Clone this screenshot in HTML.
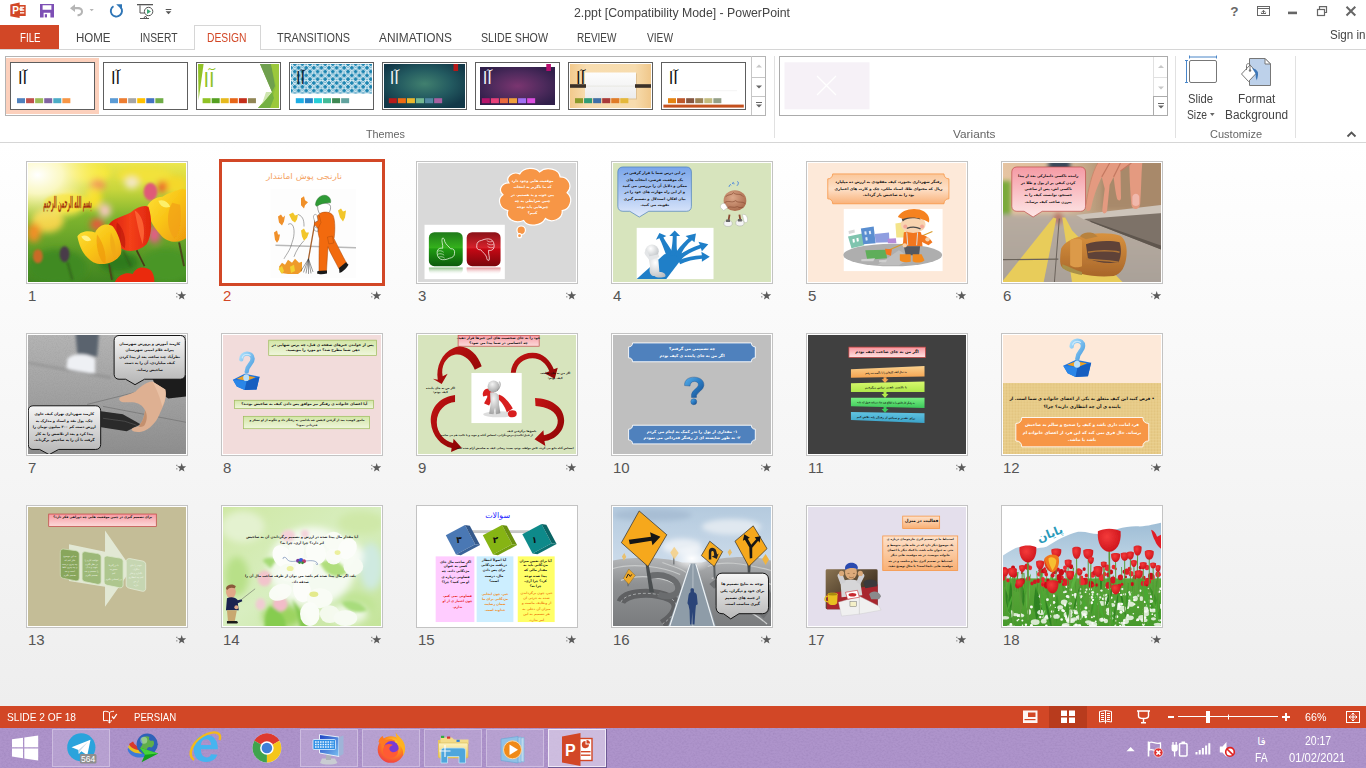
<!DOCTYPE html>
<html lang="en">
<head>
<meta charset="utf-8">
<title>2.ppt [Compatibility Mode] - PowerPoint</title>
<style>
html,body{margin:0;padding:0;}
body{width:1366px;height:768px;overflow:hidden;position:relative;background:#fff;font-family:"Liberation Sans",sans-serif;font-size:12px;color:#444;}
.abs{position:absolute;}
.t{position:absolute;white-space:nowrap;line-height:1;transform-origin:0 0;}
#titlebar{left:0;top:0;width:1366px;height:25px;background:#fff;}
#tabs{left:0;top:25px;width:1366px;height:24px;background:#fff;border-bottom:1px solid #d6d6d6;}
#filetab{left:0;top:25px;width:59px;height:24px;background:#d24726;}
#designtab{left:194px;top:25px;width:67px;height:25px;background:#fff;border:1px solid #d6d6d6;border-bottom:none;box-sizing:border-box;}
#ribbon{left:0;top:50px;width:1366px;height:92px;background:#fff;border-bottom:1px solid #d6d6d6;}
#sorter{left:0;top:143px;width:1366px;height:563px;background:linear-gradient(#ffffff,#eeeeee);}
#status{left:0;top:706px;width:1366px;height:22px;background:#d24726;}
#taskbar{left:0;top:728px;width:1366px;height:40px;background:#ae94cb;}
.tab{font-size:12px;color:#444;top:31.9px;}
.glabel{font-size:11px;color:#666;top:128.8px;}
.rb{font-size:12px;color:#444;}
.tk{font-size:12px;color:#fff;}
.st{font-size:11.5px;color:#fff;top:712.1px;}
.thumb{position:absolute;width:160px;height:121px;border:1px solid #c3c3c3;background:#fff;overflow:hidden;}
.thumb svg{position:absolute;left:1px;top:1px;width:158px;height:119px;display:block;}
.thumb.sel{border:3px solid #d24726;width:160px;height:121px;}
.thumb.sel svg{left:0;top:0;width:160px;height:121px;}
.num{position:absolute;font-size:15px;color:#555;line-height:1;}
.star{position:absolute;font-size:13px;color:#555;line-height:1;}
.fa{font-family:"DejaVu Sans","Liberation Sans",sans-serif;direction:rtl;}
</style>
<style>
#tb0{transform:scaleX(0.809)}
#tb1{transform:scaleX(0.958)}
#tb2{transform:scaleX(0.856)}
#tb3{transform:scaleX(0.858)}
#tb4{transform:scaleX(0.905)}
#tb5{transform:scaleX(0.989)}
#tb6{transform:scaleX(0.889)}
#tb7{transform:scaleX(0.834)}
#tb8{transform:scaleX(0.848)}
#ttl{transform:scaleX(0.946)}
#signin{transform:scaleX(0.893)}
#gl0{transform:scaleX(0.981)}
#gl1{transform:scaleX(1.075)}
#gl2{transform:scaleX(1.001)}
#rb0{transform:scaleX(0.937)}
#rb1{transform:scaleX(0.857)}
#rb2{transform:scaleX(0.981)}
#rb3{transform:scaleX(0.984)}
#st0{transform:scaleX(0.885)}
#st1{transform:scaleX(0.836)}
#st2{transform:scaleX(0.929)}
#tk0{transform:scaleX(0.866)}
#tk1{transform:scaleX(0.872)}
#tk2{transform:scaleX(0.936)}
</style>
</head>
<body>
<div class="abs" id="titlebar"></div>
<!-- quick access toolbar -->
<svg class="abs" style="left:0;top:0" width="180" height="25" viewBox="0 0 180 25">
  <!-- powerpoint logo -->
  <path d="M10.3 4.6 L19.6 2.6 V18 L10.3 16.2 Z" fill="#d24726"/>
  <rect x="19" y="5" width="6.7" height="11" fill="#d24726"/>
  <rect x="20" y="6.6" width="4.2" height="1.3" fill="#fff"/><rect x="20" y="9.4" width="4.2" height="1.3" fill="#fff"/><rect x="20" y="12.2" width="4.2" height="1.3" fill="#fff"/>
  <circle cx="21" cy="9" r="1.8" fill="#fff" opacity=".85"/>
  <text x="12.2" y="14" font-family="Liberation Sans, sans-serif" font-weight="bold" font-size="10" fill="#fff">P</text>
  <!-- save -->
  <path d="M40 4 H54 V17.400 H40 Z M42.600 5.300 V9.800 H51.400 V5.300 Z M43.600 12.800 V17.400 H50.400 V12.800 Z" fill="#7d4fb5" fill-rule="evenodd"/>
  <rect x="44.800" y="14.200" width="2.200" height="3.200" fill="#7d4fb5"/>
  <!-- undo -->
  <path d="M70 8.3 L75 4.3 V7 H78 C81.5 7 83 9.3 83 11.5 C83 14.2 80.8 16.3 77.5 16.3 V14.3 C79.6 14.3 81 13.2 81 11.5 C81 10 79.8 9.2 78 9.2 H75 V12 Z" fill="#b5b5b5"/>
  <path d="M89.6 9 H93.8 L91.7 11.3 Z" fill="#b5b5b5"/>
  <!-- redo/repeat -->
  <path d="M113.5 6.2 A5.6 5.6 0 1 0 120.5 7.2" fill="none" stroke="#2e75b6" stroke-width="1.9"/>
  <path d="M116.2 4.2 H122 V10 Z" fill="#2e75b6"/>
  <!-- start from beginning -->
  <rect x="137" y="4" width="16" height="1.3" fill="#555"/>
  <path d="M140 5.3 V13 H144.5" fill="none" stroke="#555" stroke-width="1"/>
  <circle cx="148.6" cy="11.5" r="4.2" fill="#fff" stroke="#555" stroke-width="1"/>
  <path d="M147 9 L151 11.5 L147 14 Z" fill="#3fa876"/>
  <path d="M140 18.5 H149 M143.5 18.5 L145.5 16 L147 18.5" fill="none" stroke="#555" stroke-width="1"/>
  <!-- customize -->
  <rect x="165.7" y="9" width="5.6" height="1" fill="#555"/>
  <path d="M165.7 11.3 H171.3 L168.5 14.2 Z" fill="#555"/>
</svg>
<div class="t" id="ttl" style="left:574px;top:6px;font-size:13px;color:#444;">2.ppt [Compatibility Mode] - PowerPoint</div>
<!-- window controls -->
<svg class="abs" style="left:1220px;top:0" width="146" height="25" viewBox="1220 0 146 25">
  <text x="1230.300" y="16" font-family="Liberation Sans, sans-serif" font-weight="bold" font-size="13.500" fill="#666">?</text>
  <rect x="1257.500" y="6.500" width="12" height="9" fill="none" stroke="#666" stroke-width="1"/>
  <path d="M1257.500 8.500 H1269.500" stroke="#666" stroke-width="1" fill="none"/>
  <path d="M1263.500 14 V10.500 M1261.300 12.500 L1263.500 10.300 L1265.700 12.500 M1261 13.500 H1266" fill="none" stroke="#666" stroke-width="1"/>
  <rect x="1288" y="11.600" width="9" height="2.600" fill="#666"/>
  <rect x="1317.500" y="9.500" width="7" height="6" fill="#fff" stroke="#666" stroke-width="1.200"/>
  <path d="M1319.500 9.500 V6.600 H1326.500 V12.500 H1324.500" fill="none" stroke="#666" stroke-width="1.200"/>
  <path d="M1346.500 6.700 L1355.300 15.500 M1355.300 6.700 L1346.500 15.500" stroke="#666" stroke-width="2" fill="none"/>
</svg>
<!-- tabs -->
<div class="abs" id="tabs"></div>
<div class="abs" id="filetab"></div>
<div class="abs" id="designtab"></div>
<div class="t tab" id="tb0" style="left:19.500px;color:#fff;">FILE</div>
<div class="t tab" id="tb1" style="left:76px;">HOME</div>
<div class="t tab" id="tb2" style="left:139.500px;">INSERT</div>
<div class="t tab" id="tb3" style="left:207px;color:#d24726;">DESIGN</div>
<div class="t tab" id="tb4" style="left:276.500px;">TRANSITIONS</div>
<div class="t tab" id="tb5" style="left:379px;">ANIMATIONS</div>
<div class="t tab" id="tb6" style="left:481px;">SLIDE SHOW</div>
<div class="t tab" id="tb7" style="left:577px;">REVIEW</div>
<div class="t tab" id="tb8" style="left:646.500px;">VIEW</div>
<div class="t" id="signin" style="left:1329.800px;top:28.200px;font-size:13px;color:#444;">Sign in</div>
<!-- ribbon -->
<div class="abs" id="ribbon"></div>
<!-- themes gallery -->
<div class="abs" style="left:5px;top:56px;width:759px;height:58px;border:1px solid #b4b4b4;background:#fff;"></div>
<div class="abs" style="left:6px;top:58px;width:93px;height:56px;background:#fcd0bc;"></div>
<svg class="abs" style="left:10px;top:62px" width="85" height="48" viewBox="0 0 85 48"><rect width="85" height="48" fill="#fff"/><text x="17.2" y="21.6" font-family="DejaVu Sans, sans-serif" font-size="16.500" fill="#111" text-anchor="start" direction="rtl" >آا</text><rect x="7.00" y="36.20" width="8" height="5" fill="#4f81bd"/><rect x="16.07" y="36.20" width="8" height="5" fill="#c0504d"/><rect x="25.14" y="36.20" width="8" height="5" fill="#9bbb59"/><rect x="34.21" y="36.20" width="8" height="5" fill="#8064a2"/><rect x="43.28" y="36.20" width="8" height="5" fill="#4bacc6"/><rect x="52.35" y="36.20" width="8" height="5" fill="#f79646"/><rect x="0.5" y="0.5" width="84" height="47" fill="none" stroke="#5e5e5e" stroke-width="1"/></svg>
<svg class="abs" style="left:103px;top:62px" width="85" height="48" viewBox="0 0 85 48"><rect width="85" height="48" fill="#fff"/><text x="17.2" y="21.6" font-family="DejaVu Sans, sans-serif" font-size="16.500" fill="#111" text-anchor="start" direction="rtl" >آا</text><rect x="7.00" y="36.20" width="8" height="5" fill="#5b9bd5"/><rect x="16.07" y="36.20" width="8" height="5" fill="#ed7d31"/><rect x="25.14" y="36.20" width="8" height="5" fill="#a5a5a5"/><rect x="34.21" y="36.20" width="8" height="5" fill="#ffc000"/><rect x="43.28" y="36.20" width="8" height="5" fill="#4472c4"/><rect x="52.35" y="36.20" width="8" height="5" fill="#70ad47"/><rect x="0.5" y="0.5" width="84" height="47" fill="none" stroke="#5e5e5e" stroke-width="1"/></svg>
<svg class="abs" style="left:196px;top:62px" width="85" height="48" viewBox="0 0 85 48"><rect width="85" height="48" fill="#fff"/><path d="M2 2 H7.6 L2.6 38 Z" fill="#90c226"/><path d="M64 2 H83 V46 H62 L76 30 Z" fill="#8cc03a"/><path d="M64 2 H75 L79 24 L76 30 Z" fill="#6f9f4e"/><path d="M75 2 H83 V46 H74 L80 24 Z" fill="#9bc83c"/><path d="M76 30 L66 42 L62 46 H74 L78 36 Z" fill="#74b043"/><path d="M70 30 L76 30 L66 42 Z" fill="#cfe6b0"/><text x="18.700" y="25" font-family="DejaVu Sans, sans-serif" font-size="20" fill="#90c226" text-anchor="start" direction="rtl" >آا</text><rect x="6.60" y="36.20" width="8" height="5" fill="#90c226"/><rect x="15.67" y="36.20" width="8" height="5" fill="#54a021"/><rect x="24.74" y="36.20" width="8" height="5" fill="#e6b91e"/><rect x="33.81" y="36.20" width="8" height="5" fill="#e76618"/><rect x="42.88" y="36.20" width="8" height="5" fill="#c42f1a"/><rect x="51.95" y="36.20" width="8" height="5" fill="#918655"/><rect x="0.5" y="0.5" width="84" height="47" fill="none" stroke="#5e5e5e" stroke-width="1"/></svg>
<svg class="abs" style="left:289px;top:62px" width="85" height="48" viewBox="0 0 85 48"><rect width="85" height="48" fill="#fff"/><defs><pattern id="pt4" width="7.600" height="7.600" patternUnits="userSpaceOnUse" x="2" y="2"><rect width="7.600" height="7.600" fill="#1b84b0"/><path d="M-1 -1 L8.600 8.600 M8.600 -1 L-1 8.600" stroke="#e8f4f9" stroke-width="1.900"/><path d="M-1 -1 L8.600 8.600 M8.600 -1 L-1 8.600" stroke="#1b84b0" stroke-width=".600" stroke-dasharray="2.600 1.200" stroke-dashoffset="-.300"/></pattern></defs><rect x="2" y="2" width="81" height="29.5" fill="url(#pt4)"/><text x="16.2" y="21.6" font-family="DejaVu Sans, sans-serif" font-size="16.500" fill="#10263a" text-anchor="start" direction="rtl" >آا</text><rect x="6.80" y="36.20" width="8" height="5" fill="#1cade4"/><rect x="15.87" y="36.20" width="8" height="5" fill="#2683c6"/><rect x="24.94" y="36.20" width="8" height="5" fill="#27ced7"/><rect x="34.01" y="36.20" width="8" height="5" fill="#42ba97"/><rect x="43.08" y="36.20" width="8" height="5" fill="#3e8853"/><rect x="52.15" y="36.20" width="8" height="5" fill="#62a39f"/><rect x="0.5" y="0.5" width="84" height="47" fill="none" stroke="#5e5e5e" stroke-width="1"/></svg>
<svg class="abs" style="left:382px;top:62px" width="85" height="48" viewBox="0 0 85 48"><rect width="85" height="48" fill="#fff"/><defs><radialGradient id="g5" cx=".5" cy=".45" r=".6"><stop offset="0" stop-color="#41806f"/><stop offset=".55" stop-color="#235a60"/><stop offset="1" stop-color="#123848"/></radialGradient></defs><rect x="2" y="2" width="81" height="44" fill="url(#g5)"/><rect x="71.5" y="2" width="4.6" height="7" fill="#b71818"/><text x="16.8" y="21.6" font-family="DejaVu Sans, sans-serif" font-size="16.500" fill="#f4f4f4" text-anchor="start" direction="rtl" >آا</text><rect x="6.80" y="36.20" width="8" height="5" fill="#b71a1a"/><rect x="15.87" y="36.20" width="8" height="5" fill="#ee6a12"/><rect x="24.94" y="36.20" width="8" height="5" fill="#ecb82c"/><rect x="34.01" y="36.20" width="8" height="5" fill="#74b892"/><rect x="43.08" y="36.20" width="8" height="5" fill="#5288a2"/><rect x="52.15" y="36.20" width="8" height="5" fill="#a860a0"/><rect x="0.5" y="0.5" width="84" height="47" fill="none" stroke="#5e5e5e" stroke-width="1"/></svg>
<svg class="abs" style="left:475px;top:62px" width="85" height="48" viewBox="0 0 85 48"><rect width="85" height="48" fill="#fff"/><defs><radialGradient id="g6" cx=".5" cy=".5" r=".6"><stop offset="0" stop-color="#7a3570"/><stop offset=".6" stop-color="#4d2a5c"/><stop offset="1" stop-color="#301f4a"/></radialGradient></defs><rect x="5" y="5" width="75" height="38" fill="url(#g6)"/><rect x="71.3" y="2" width="4.6" height="7" fill="#b80e6e"/><text x="16.8" y="21.6" font-family="DejaVu Sans, sans-serif" font-size="16.500" fill="#f4f4f4" text-anchor="start" direction="rtl" >آا</text><rect x="6.80" y="36.20" width="8" height="5" fill="#b5146a"/><rect x="15.87" y="36.20" width="8" height="5" fill="#e8407a"/><rect x="24.94" y="36.20" width="8" height="5" fill="#ea6a3e"/><rect x="34.01" y="36.20" width="8" height="5" fill="#f0a03c"/><rect x="43.08" y="36.20" width="8" height="5" fill="#a070f4"/><rect x="52.15" y="36.20" width="8" height="5" fill="#dc4ee0"/><rect x="0.5" y="0.5" width="84" height="47" fill="none" stroke="#5e5e5e" stroke-width="1"/></svg>
<svg class="abs" style="left:568px;top:62px" width="85" height="48" viewBox="0 0 85 48"><rect width="85" height="48" fill="#fff"/><defs><linearGradient id="g7" x1="0" x2="1"><stop offset="0" stop-color="#f2c98c"/><stop offset=".2" stop-color="#f8ddb0"/><stop offset=".8" stop-color="#f7dcae"/><stop offset="1" stop-color="#f0c78a"/></linearGradient><linearGradient id="g7b" x1="0" x2="0" y1="0" y2="1"><stop offset="0" stop-color="#fdfdfd"/><stop offset="1" stop-color="#ececec"/></linearGradient></defs><rect x="2" y="2" width="81" height="44" fill="url(#g7)"/><rect x="18" y="11.5" width="51" height="26" fill="#caa777" opacity=".5"/><rect x="17" y="10.5" width="51" height="26" fill="url(#g7b)"/><rect x="2" y="22.2" width="16" height="3.6" fill="#3a3028"/><rect x="67" y="22.2" width="16" height="3.6" fill="#3a3028"/><rect x="18" y="23.8" width="49" height=".5" fill="#dcdccf"/><text x="17.2" y="21.6" font-family="DejaVu Sans, sans-serif" font-size="16.500" fill="#111" text-anchor="start" direction="rtl" >آا</text><rect x="7.00" y="36.20" width="8" height="5" fill="#8a9a2a"/><rect x="16.07" y="36.20" width="8" height="5" fill="#2e9c75"/><rect x="25.14" y="36.20" width="8" height="5" fill="#3e6fa8"/><rect x="34.21" y="36.20" width="8" height="5" fill="#a83a3a"/><rect x="43.28" y="36.20" width="8" height="5" fill="#e07b27"/><rect x="52.35" y="36.20" width="8" height="5" fill="#e5b83b"/><rect x="0.5" y="0.5" width="84" height="47" fill="none" stroke="#5e5e5e" stroke-width="1"/></svg>
<svg class="abs" style="left:661px;top:62px" width="85" height="48" viewBox="0 0 85 48"><rect width="85" height="48" fill="#fff"/><rect x="2.4" y="42.6" width="80.4" height="3" fill="#c4501e"/><rect x="10" y="28.6" width="66" height=".5" fill="#e8e8e8"/><text x="16.8" y="21.6" font-family="DejaVu Sans, sans-serif" font-size="16.500" fill="#111" text-anchor="start" direction="rtl" >آا</text><rect x="7.00" y="36.20" width="8" height="5" fill="#e48312"/><rect x="16.07" y="36.20" width="8" height="5" fill="#bd582c"/><rect x="25.14" y="36.20" width="8" height="5" fill="#865640"/><rect x="34.21" y="36.20" width="8" height="5" fill="#9b8357"/><rect x="43.28" y="36.20" width="8" height="5" fill="#c2bc80"/><rect x="52.35" y="36.20" width="8" height="5" fill="#94a088"/><rect x="0.5" y="0.5" width="84" height="47" fill="none" stroke="#5e5e5e" stroke-width="1"/></svg>
<div class="abs" style="left:751px;top:56px;width:14px;height:59px;border-left:1px solid #c6c6c6;box-sizing:border-box;"></div>
<div class="abs" style="left:751px;top:77px;width:14px;height:20px;border:1px solid #c6c6c6;border-right:none;box-sizing:border-box;"></div>
<svg class="abs" style="left:751px;top:56px" width="15" height="60" viewBox="0 0 15 60"><path d="M5 11.500 H11 L8 8.500 Z" fill="#c8c8c8"/><path d="M5 29.500 H11 L8 32.500 Z" fill="#666"/><rect x="5" y="46" width="6" height="1" fill="#666"/><path d="M5 48.500 H11 L8 51.500 Z" fill="#666"/></svg>
<div class="t glabel" id="gl0" style="left:366px;">Themes</div>
<!-- variants -->
<div class="abs" style="left:774px;top:56px;width:1px;height:82px;background:#e1e1e1;"></div>
<div class="abs" style="left:779px;top:56px;width:387px;height:58px;border:1px solid #ababab;background:#fff;"></div>
<svg class="abs" style="left:784px;top:62px" width="86" height="48" viewBox="0 0 86 48"><rect x=".5" y=".3" width="85" height="47" fill="#f6f1f7"/><path d="M33 14 L52 33 M52 14 L33 33" stroke="#fff" stroke-width="1.2" fill="none"/></svg>
<div class="abs" style="left:1153px;top:57px;width:14px;height:39px;border-left:1px solid #e1e1e1;box-sizing:border-box;"></div>
<div class="abs" style="left:1153px;top:77px;width:14px;height:1px;background:#e1e1e1;"></div>
<div class="abs" style="left:1153px;top:96px;width:15px;height:20px;border:1px solid #ababab;box-sizing:border-box;"></div>
<svg class="abs" style="left:1153px;top:56px" width="15" height="60" viewBox="0 0 15 60"><path d="M5 12 H11 L8 9 Z" fill="#c8c8c8"/><path d="M5 30.500 H11 L8 33.500 Z" fill="#c8c8c8"/><rect x="5" y="47" width="6" height="1" fill="#666"/><path d="M5 49.500 H11 L8 52.500 Z" fill="#666"/></svg>
<div class="t glabel" id="gl1" style="left:953px;">Variants</div>
<!-- customize -->
<div class="abs" style="left:1175px;top:56px;width:1px;height:82px;background:#e1e1e1;"></div>
<div class="abs" style="left:1295px;top:56px;width:1px;height:82px;background:#e1e1e1;"></div>
<svg class="abs" style="left:1180px;top:54px" width="100" height="36" viewBox="1180 54 100 36">
  <rect x="1189.500" y="60.500" width="27" height="22" rx="1.500" fill="#fff" stroke="#777" stroke-width="1"/>
  <path d="M1189.500 57 H1216.500 M1189.500 55.500 V58.500 M1216.500 55.500 V58.500 M1186.500 60.500 V82.500 M1185 60.500 H1188 M1185 82.500 H1188" stroke="#4a86c8" stroke-width="1" fill="none"/>
  <path d="M1249.500 58.500 H1265 L1270.500 64 V85.500 H1249.500 Z" fill="#bdd1ea" stroke="#777" stroke-width="1"/>
  <path d="M1265 58.500 V64 H1270.500 Z" fill="#fff" stroke="#777" stroke-width="1" stroke-linejoin="round"/>
  <path d="M1241.500 74 L1250 65 L1257 72.500 L1248.500 81.500 Z" fill="#fff" stroke="#777" stroke-width="1"/>
  <path d="M1252 68 C1256 69 1258.500 71 1258 75 C1257.700 77.500 1257 79 1257 80.500 C1255.500 78 1255.800 76 1255.500 73.500 Z" fill="#3d77b8"/>
  <path d="M1246.500 70 V65.500 C1246.500 63 1250 63 1250 65.500 V70" fill="none" stroke="#777" stroke-width="1"/>
  <circle cx="1250" cy="70.500" r="1.200" fill="#777"/>
</svg>
<div class="t rb" id="rb0" style="left:1188px;top:92.500px;">Slide</div>
<div class="t rb" id="rb1" style="left:1187px;top:108.500px;">Size</div>
<svg class="abs" style="left:1209px;top:112px" width="7" height="5" viewBox="0 0 7 5"><path d="M1 1 H5.600 L3.300 4 Z" fill="#666"/></svg>
<div class="t rb" id="rb2" style="left:1237.500px;top:92.500px;">Format</div>
<div class="t rb" id="rb3" style="left:1224.500px;top:108.500px;">Background</div>
<div class="t glabel" id="gl2" style="left:1209.500px;">Customize</div>
<svg class="abs" style="left:1345px;top:129px" width="14" height="10" viewBox="0 0 14 10"><path d="M2.500 7.500 L6.500 3.500 L10.500 7.500" fill="none" stroke="#555" stroke-width="1.800"/></svg>
<!-- slide sorter thumbnails -->
<div class="thumb" style="left:26px;top:161px">
<svg viewBox="0 0 160 120" preserveAspectRatio="none"><defs>
<linearGradient id="s1bg" x1="0" y1="0" x2="0" y2="1"><stop offset="0" stop-color="#ece64e"/><stop offset=".22" stop-color="#c9d63c"/><stop offset=".45" stop-color="#7fb52e"/><stop offset="1" stop-color="#3f8420"/></linearGradient>
<radialGradient id="s1sun" cx=".06" cy=".1" r=".45"><stop offset="0" stop-color="#fff"/><stop offset=".35" stop-color="#fffbd0" stop-opacity=".9"/><stop offset="1" stop-color="#f6ee60" stop-opacity="0"/></radialGradient>
<filter id="s1b3" x="-30%" y="-30%" width="160%" height="160%"><feGaussianBlur stdDeviation="3"/></filter>
<filter id="s1b1" x="-30%" y="-30%" width="160%" height="160%"><feGaussianBlur stdDeviation="1.2"/></filter>
<filter id="s1b0" x="-10%" y="-10%" width="120%" height="120%"><feGaussianBlur stdDeviation=".5"/></filter>
<linearGradient id="s1y" x1="0" y1="0" x2="1" y2="1"><stop offset="0" stop-color="#fde43a"/><stop offset=".5" stop-color="#f9c416"/><stop offset="1" stop-color="#ee9a10"/></linearGradient>
<linearGradient id="s1r" x1="0" y1="0" x2="1" y2="0"><stop offset="0" stop-color="#d81e0c"/><stop offset=".5" stop-color="#f4401a"/><stop offset="1" stop-color="#e0260e"/></linearGradient>
</defs>
<rect width="160" height="120" fill="url(#s1bg)"/>
<g filter="url(#s1b3)">
<ellipse cx="62" cy="10" rx="22" ry="9" fill="#f7e83a"/><ellipse cx="118" cy="12" rx="28" ry="9" fill="#f2e23a"/><ellipse cx="150" cy="22" rx="12" ry="10" fill="#f4d82a"/>
<ellipse cx="70" cy="22" rx="8" ry="6" fill="#f08a50"/><ellipse cx="105" cy="20" rx="7" ry="6" fill="#f4e8c8"/><ellipse cx="136" cy="24" rx="5" ry="6" fill="#ee5a2a"/>
<ellipse cx="20" cy="58" rx="16" ry="12" fill="#f2d24a"/><ellipse cx="6" cy="70" rx="7" ry="10" fill="#f09028"/><ellipse cx="40" cy="40" rx="16" ry="12" fill="#f5e23a"/>
<ellipse cx="66" cy="36" rx="9" ry="11" fill="#f7de28"/><ellipse cx="78" cy="48" rx="6" ry="7" fill="#f6c8c0"/><ellipse cx="70" cy="62" rx="7" ry="6" fill="#e85a3a"/>
<ellipse cx="30" cy="105" rx="30" ry="18" fill="#3f8a22"/><ellipse cx="140" cy="104" rx="26" ry="18" fill="#4a9626"/><ellipse cx="92" cy="100" rx="20" ry="10" fill="#2f7a1c"/>
<ellipse cx="128" cy="72" rx="6" ry="9" fill="#e85a8a"/>
</g>
<rect width="160" height="120" fill="url(#s1sun)"/>
<g filter="url(#s1b1)">
<ellipse cx="124" cy="29" rx="7" ry="9" fill="#e05a78"/><ellipse cx="10" cy="94" rx="5" ry="7" fill="#c86a28"/><ellipse cx="37" cy="92" rx="5" ry="8" fill="#4a3a48"/>
<path d="M40 100 L45 118 M96 88 L104 104 M83 104 L86 118" stroke="#2f5a18" stroke-width="1.500" fill="none"/>
</g>
<g filter="url(#s1b0)">
<path d="M153 80 L158 104" stroke="#4a4a1a" stroke-width="2"/><path d="M110 88 L118 104" stroke="#4a3a18" stroke-width="1.800"/><path d="M82 102 L85 118" stroke="#4a4a1a" stroke-width="1.800"/>
<!-- right yellow tulip -->
<path d="M120 46 C122 38 130 34 136 34 C142 30 150 28 156 26 L160 27 V76 C152 82 140 80 134 72 C126 64 122 54 120 46 Z" fill="url(#s1y)"/>
<path d="M146 40 C140 50 140 66 148 76 C154 72 156 56 154 42 Z" fill="#f2a012" opacity=".7"/><path d="M132 38 C138 36 142 40 144 44 C138 46 134 44 132 38 Z" fill="#fdf06a"/>
<!-- red tulip -->
<path d="M82 62 C86 56 96 54 104 50 C110 44 118 42 122 44 C126 56 126 72 120 82 C112 90 100 90 94 86 C86 80 82 70 82 62 Z" fill="url(#s1r)"/>
<path d="M108 48 C116 52 120 66 116 82 C112 70 110 58 108 48 Z" fill="#ff6a3a" opacity=".8"/><path d="M90 60 C96 64 100 76 98 86 C92 82 88 70 90 60 Z" fill="#b8140a" opacity=".6"/>
<!-- left yellow tulip -->
<path d="M50 74 C54 68 62 68 68 70 C72 62 80 60 86 64 C92 72 96 84 94 92 C88 102 74 104 66 100 C56 94 52 84 50 74 Z" fill="url(#s1y)"/>
<path d="M70 72 C76 80 80 92 78 102 C72 98 68 84 70 72 Z" fill="#f09a10" opacity=".7"/><path d="M84 70 C88 78 90 88 88 96 C84 90 82 80 84 70 Z" fill="#f0a818" opacity=".7"/><path d="M54 74 C58 72 62 74 64 78 C60 80 56 78 54 74 Z" fill="#fff28a"/>
<!-- bottom red tulip -->
<path d="M88 120 C92 112 100 110 106 112 C110 104 118 104 124 108 C128 112 128 118 128 120 Z" fill="#ea2a10"/>
</g>
<!-- calligraphy -->
<ellipse cx="40" cy="40" rx="24" ry="9" fill="#f7e232" opacity=".55" filter="url(#s1b1)"/>
<g transform="translate(40 45.500) scale(1 2.300)"><text x="0" y="0" font-family="DejaVu Sans, sans-serif" font-size="7.200" font-weight="bold" fill="#a02e12" text-anchor="middle" direction="rtl" textLength="49" lengthAdjust="spacingAndGlyphs" stroke="#c88a18" stroke-width=".2">بسم الله الرحمن الرحیم</text></g></svg></div>
<div class="num" style="left:28px;top:288.1px;">1</div>
<svg class="abs" style="left:174px;top:289px" width="14" height="12" viewBox="0 0 14 12"><path d="M7.7 2.1 L8.8 5.3 L12.2 5.3 L9.5 7.4 L10.5 10.6 L7.7 8.7 L4.9 10.6 L5.9 7.4 L3.2 5.3 L6.6 5.3 Z" fill="#5a5a5a"/><rect x="2.200" y="3.800" width="1.200" height="1.100" fill="#777"/><rect x="2.200" y="7.300" width="1.200" height="1.100" fill="#777"/></svg>
<div class="thumb sel" style="left:219px;top:159px">
<svg viewBox="0 0 160 120" preserveAspectRatio="none"><rect width="160" height="120" fill="#fff"/>
<text x="82" y="17" font-family="DejaVu Sans, sans-serif" font-size="8" fill="#f4a264" text-anchor="middle" direction="rtl" textLength="76" lengthAdjust="spacingAndGlyphs">نارنجی پوش امانتدار</text>
<rect x="48.500" y="27" width="85.500" height="88" fill="#fdfdfd"/>
<!-- ground -->
<path d="M53.500 82.500 L134 85" stroke="#b9b9b9" stroke-width="1.600" fill="none"/>
<!-- swirls -->
<path d="M66 62 C72 58 74 70 70 80 C68 88 64 92 62 96 M76 52 C82 54 82 60 82 64 M82 78 C78 82 74 88 72 94" fill="none" stroke="#555" stroke-width=".5"/>
<!-- leaves -->
<g fill="#f0902a"><path d="M79 36 L82 34 L83 38 L86 40 L83 43 L82 46 L79 43 Z"/><path d="M56 54 L59 52 L61 55 L63 53 L62 59 L60 63 L57 60 Z"/><path d="M52 70 L55 68 L56 72 L58 72 L57 77 L55 80 L53 77 Z"/></g>
<g fill="#f2c62a"><path d="M67 52 L71 50 L73 53 L76 52 L75 57 L73 60 L70 58 Z"/><path d="M116 48 L119 46 L121 49 L124 48 L123 55 L121 59 L118 55 Z"/><path d="M79 68 L82 66 L84 70 L87 70 L85 75 L82 78 L80 74 Z"/></g>
<!-- leaf pile -->
<path d="M57 104 L60 100 L63 102 L66 97 L70 100 L73 96 L77 100 L80 99 L80 108 L76 111 L66 111 L59 110 Z" fill="#ee9a2a"/>
<path d="M56.500 106 L60 103 L62 108 L60 111 Z M68 104 L72 102 L73 108 L69 110 Z" fill="#f2d030"/>
<!-- rake -->
<path d="M94 54 L86.500 96" stroke="#a8602a" stroke-width="1.300" fill="none"/>
<path d="M86.500 96 L79 108 M86.500 96 L81.500 109.500 M86.500 96 L84 110.500 M86.500 96 L86.500 111 M86.500 96 L89 110.500 M86.500 96 L91 109" stroke="#333" stroke-width=".5" fill="none"/>
<!-- person -->
<path d="M96 42 C98 40 108 40 108.500 44 C109 48 107 51 104 52 H98 C96 49 95 45 96 42 Z" fill="#fff" stroke="#444" stroke-width=".5"/>
<path d="M93.400 42.500 C94 36 99 32.500 103 33 C107 33.500 109.500 37 108.500 40.500 C104 40 98 41.500 94.500 44 Z" fill="#2f9a36" stroke="#1f6a24" stroke-width=".4"/>
<path d="M98 51 C102 49 108 49 111 53 C113.500 58 113 70 112 76 C116 84 121 94 124.500 100 L117 106 C113 98 108 90 106 84 L104.500 108 L97 108.500 C97 96 97 84 97.500 76 C95 68 95 58 98 51 Z" fill="#f26a0e" stroke="#a8480a" stroke-width=".5"/>
<path d="M97 52 C94 54 92 58 92.500 62 L96 66 L99 60 Z" fill="#f26a0e" stroke="#a8480a" stroke-width=".4"/>
<path d="M91.500 55 C91 52 94 51 95 53 L96 58 L93 60 Z M92 64 L96 66 L95.500 69 L92.500 68 Z" fill="#fff" stroke="#444" stroke-width=".4"/>
<rect x="106" y="74" width="5" height="7" fill="none" stroke="#a8480a" stroke-width=".4" transform="rotate(-12 108 77)"/>
<path d="M95.500 108 L105 107.500 L105 110.500 C101 111.500 97 111.500 95 110.500 Z" fill="#1a1a1a"/>
<path d="M117 105 L124 99.500 L126.500 102 C124 106 120.500 109.500 117.500 110 Z" fill="#1a1a1a"/></svg></div>
<div class="num" style="left:223px;top:288.1px;color:#d24726;">2</div>
<svg class="abs" style="left:369px;top:289px" width="14" height="12" viewBox="0 0 14 12"><path d="M7.7 2.1 L8.8 5.3 L12.2 5.3 L9.5 7.4 L10.5 10.6 L7.7 8.7 L4.9 10.6 L5.9 7.4 L3.2 5.3 L6.6 5.3 Z" fill="#5a5a5a"/><rect x="2.200" y="3.800" width="1.200" height="1.100" fill="#777"/><rect x="2.200" y="7.300" width="1.200" height="1.100" fill="#777"/></svg>
<div class="thumb" style="left:416px;top:161px">
<svg viewBox="0 0 160 120" preserveAspectRatio="none"><defs>
<linearGradient id="s3g" x1="0" y1="0" x2="0" y2="1"><stop offset="0" stop-color="#1f7a1a"/><stop offset=".45" stop-color="#34b01c"/><stop offset=".5" stop-color="#1f9a12"/><stop offset="1" stop-color="#0c5a0c"/></linearGradient>
<linearGradient id="s3r" x1="0" y1="0" x2="0" y2="1"><stop offset="0" stop-color="#8a1218"/><stop offset=".45" stop-color="#d4202a"/><stop offset=".5" stop-color="#c40814"/><stop offset="1" stop-color="#7a060c"/></linearGradient>
<linearGradient id="s3gf" x1="0" y1="0" x2="0" y2="1"><stop offset="0" stop-color="#2f8a22" stop-opacity=".55"/><stop offset="1" stop-color="#fff" stop-opacity="0"/></linearGradient>
<linearGradient id="s3rf" x1="0" y1="0" x2="0" y2="1"><stop offset="0" stop-color="#c8202a" stop-opacity=".5"/><stop offset="1" stop-color="#fff" stop-opacity="0"/></linearGradient>
</defs>
<rect width="160" height="120" fill="#d9d9d9"/>
<rect x="6.600" y="62.300" width="81.300" height="54.800" fill="#fff"/>
<rect x="11" y="69.800" width="34.300" height="34.200" rx="5.500" fill="url(#s3g)"/>
<rect x="49.300" y="69.800" width="34.300" height="34.200" rx="5.500" fill="url(#s3r)"/>
<path d="M11 105.500 H45.300 V108 C45.300 111 42 112.800 40 112.800 H16 C13 112.800 11 111 11 108 Z" fill="url(#s3gf)"/>
<path d="M49.300 105.500 H83.600 V108 C83.600 111 81 112.800 79 112.800 H54 C51 112.800 49.300 111 49.300 108 Z" fill="url(#s3rf)"/>
<!-- thumbs up -->
<path d="M24.500 76 C26 75 27 77 27 79 C28 82 31 84 33 86.500 C36 86 37.500 88 37 91 C37 94 35 95.500 32 96 C29 97.500 25 98 23 97 C20 96 19 92 19.500 89 C20 86 23 85.500 25 86 C25.500 82 23.500 79 24.500 76 Z" fill="none" stroke="#e8f8e0" stroke-width=".8"/>
<path d="M20 89 C22 88 24.500 88.500 26 90 M20 92 C22 91 25 91.500 26.500 93 M21 95 C23 94 25.500 94.500 27 96" fill="none" stroke="#e8f8e0" stroke-width=".6"/>
<!-- thumbs down -->
<path d="M72 98 C70.500 99 69.500 97 69.500 95 C68.500 92 65.500 90 63.500 87.500 C60.500 88 59 86 59.500 83 C59.500 80 61.500 78.500 64.500 78 C67.500 76.500 71.500 76 73.500 77 C76.500 78 77.500 82 77 85 C76.500 88 73.500 88.500 71.500 88 C71 92 73 95 72 98 Z" fill="none" stroke="#fde8e8" stroke-width=".8"/>
<path d="M76.500 85 C74.500 86 72 85.500 70.500 84 M76.500 82 C74.500 83 71.500 82.500 70 81 M75.500 79 C73.500 80 71 79.500 69.500 78" fill="none" stroke="#fde8e8" stroke-width=".6"/>
<!-- cloud -->
<g fill="#f79646" stroke="#fff" stroke-width="1.200">
<path d="M92 20 C88 14 96 8 103 11 C107 4 119 4 123 9 C130 3 143 6 144 14 C153 14 157 24 151 30 C158 36 154 47 146 48 C147 57 135 61 129 56 C125 64 111 65 107 58 C98 62 88 56 91 48 C82 46 80 36 86 32 C81 28 84 20 92 20 Z"/>
<circle cx="104.500" cy="67.800" r="4.300"/><circle cx="102.800" cy="73.300" r="2"/>
</g>
<g font-family="DejaVu Sans, sans-serif" font-size="3.600" font-weight="bold" fill="#fff" text-anchor="middle" direction="rtl">
<text x="116" y="19.500">موقعیت هایی وجود دارد</text>
<text x="116" y="25.600">که ما ناگزیر به انتخاب</text>
<text x="116" y="32.900">بین خوب و بد هستیم. در</text>
<text x="116" y="39.200">چنین شرایطی به چه</text>
<text x="116" y="45.600">چیزهایی باید توجه</text>
<text x="116" y="51.600">کنیم؟</text>
</g></svg></div>
<div class="num" style="left:418px;top:288.1px;">3</div>
<svg class="abs" style="left:564px;top:289px" width="14" height="12" viewBox="0 0 14 12"><path d="M7.7 2.1 L8.8 5.3 L12.2 5.3 L9.5 7.4 L10.5 10.6 L7.7 8.7 L4.9 10.6 L5.9 7.4 L3.2 5.3 L6.6 5.3 Z" fill="#5a5a5a"/><rect x="2.200" y="3.800" width="1.200" height="1.100" fill="#777"/><rect x="2.200" y="7.300" width="1.200" height="1.100" fill="#777"/></svg>
<div class="thumb" style="left:611px;top:161px">
<svg viewBox="0 0 160 120" preserveAspectRatio="none"><defs>
<linearGradient id="s4c" x1="0" y1="0" x2="0" y2="1"><stop offset="0" stop-color="#7aa6ea"/><stop offset=".6" stop-color="#b4ccf4"/><stop offset="1" stop-color="#e2ebfb"/></linearGradient>
<radialGradient id="s4m" cx=".4" cy=".3" r=".8"><stop offset="0" stop-color="#fff"/><stop offset="1" stop-color="#b8bcc0"/></radialGradient>
<radialGradient id="s4br" cx=".4" cy=".35" r=".7"><stop offset="0" stop-color="#dca88a"/><stop offset="1" stop-color="#a8684a"/></radialGradient>
</defs>
<rect width="160" height="120" fill="#d7e4bd"/>
<path d="M10 4 H74.500 C77.500 4 79.400 6 79.400 9 V43.700 C79.400 46.700 77.500 48.700 74.500 48.700 H36.200 L26.600 54.500 L17 48.700 H10 C7 48.700 4.900 46.700 4.900 43.700 V9 C4.900 6 7 4 10 4 Z" fill="url(#s4c)" stroke="#4a7ebb" stroke-width=".7"/>
<g font-family="DejaVu Sans, sans-serif" font-size="3.700" font-weight="bold" fill="#111" text-anchor="middle" direction="rtl">
<text x="42.300" y="11.400">در این درس شما با قرار گرفتن در</text>
<text x="42.300" y="17.800">یک موقعیت فرضی، انتخاب های</text>
<text x="42.300" y="24.100">ممکن و دلایل آن را بررسی می کنید</text>
<text x="42.300" y="30.500">و از این راه مهارت های خود را در</text>
<text x="42.300" y="37.200">بیان افکار، استدلال و تصمیم گیری</text>
<text x="42.300" y="43.600">تقویت می کنید.</text>
</g>
<!-- brain character -->
<path d="M117.500 24 C118 22 119 21 119.500 22.500 M121 21 C121 19 122.500 19 122.500 21.500 M126 18.500 C127.500 19 127 22 125.500 23" fill="none" stroke="#3a7ae0" stroke-width=".9"/>
<path d="M118 52 L117 58 M128 52 L129 58" stroke="#8a4a32" stroke-width="1.800"/>
<ellipse cx="123.500" cy="38" rx="11.500" ry="10.500" fill="url(#s4br)"/>
<path d="M114 34 C117 31 120 33 122 30 C125 33 129 30 132 34 M113 40 C117 37 120 41 124 38 C127 41 131 38 134 41 M116 45 C119 43 122 46 126 44 C128 46 131 44 132 45" fill="none" stroke="#8a4e36" stroke-width=".7"/>
<path d="M109 45 C108 42 111 40 113.500 41 L116 45 L112 48 Z" fill="#fff" stroke="#aaa" stroke-width=".4"/>
<path d="M131 52 C134 51 137 54 136 59 C135 61 132.500 60 132.500 58 Z" fill="#fff" stroke="#aaa" stroke-width=".4"/>
<ellipse cx="116.500" cy="61" rx="4.200" ry="3" fill="#f4f4f4" stroke="#999" stroke-width=".4"/><ellipse cx="128.500" cy="60.500" rx="4.200" ry="3" fill="#f4f4f4" stroke="#999" stroke-width=".4"/>
<rect x="114.500" y="57" width="4" height="2.500" fill="#666"/><rect x="126.500" y="56.500" width="4" height="2.500" fill="#666"/>
<!-- picture -->
<rect x="24" y="65.400" width="77.800" height="51.700" fill="#fff"/>
<g fill="#1f7fc8">
<path d="M24 117.100 L54 117.100 L70 96 C72 93 70 90 66 90 L52 92 Z"/>
<path d="M55 96 C52 88 50 82 47 76 L43.500 77.500 L47 70.500 L54 73.500 L51 75 C54 80 58 86 62 92 Z"/>
<path d="M58 93 C60 84 60.500 78 60.500 73.500 L57 73.500 L62.500 68 L68 73.500 L64.500 73.500 C64.500 80 64 88 66 93 Z"/>
<path d="M62 93 C67 85 72 80 76.500 76 L73.500 73.500 L84 71 L82.500 80 L80 78 C75 82 70 88 68 95 Z"/>
<path d="M64 95 C72 89 80 85 88 82.500 L86.500 79.500 L96.500 82 L90 89 L89 86 C82 88.500 74 92 68 98 Z"/>
<path d="M66 98 C74 95 82 93.500 90 93 L89.500 89.500 L98 94.500 L90 99.500 L90 96.500 C82 97 74 99 68 102 Z"/>
</g>
<circle cx="39.500" cy="89" r="6.800" fill="url(#s4m)"/>
<path d="M36 95 C40 93 45 94 46 98 L47 110 C51 110 54 112 53 114.500 C50 116 44 116 42 114 C38 114 36 110 37.500 104 Z" fill="url(#s4m)"/>
<path d="M33 93 C31 91 32 88 34.500 88.500 L37 94 L46 92 L47 95 L37 98 Z" fill="#e4e6e8"/></svg></div>
<div class="num" style="left:613px;top:288.1px;">4</div>
<svg class="abs" style="left:759px;top:289px" width="14" height="12" viewBox="0 0 14 12"><path d="M7.7 2.1 L8.8 5.3 L12.2 5.3 L9.5 7.4 L10.5 10.6 L7.7 8.7 L4.9 10.6 L5.9 7.4 L3.2 5.3 L6.6 5.3 Z" fill="#5a5a5a"/><rect x="2.200" y="3.800" width="1.200" height="1.100" fill="#777"/><rect x="2.200" y="7.300" width="1.200" height="1.100" fill="#777"/></svg>
<div class="thumb" style="left:806px;top:161px">
<svg viewBox="0 0 160 120" preserveAspectRatio="none"><defs>
<linearGradient id="s5p" x1="0" y1="0" x2="0" y2="1"><stop offset="0" stop-color="#fbc79a"/><stop offset=".5" stop-color="#fde0c8"/><stop offset="1" stop-color="#f9b27a"/></linearGradient>
</defs>
<rect width="160" height="120" fill="#fde9d9"/>
<path d="M25 11 H137.700 C137.700 14 139.700 16 142.700 16 V36.100 C139.700 36.100 137.700 38.100 137.700 41.100 H25 C25 38.100 23 36.100 20 36.100 V16 C23 16 25 14 25 11 Z" fill="url(#s5p)" stroke="#f79646" stroke-width=".8"/>
<g font-family="DejaVu Sans, sans-serif" font-size="3.800" font-weight="bold" fill="#111" text-anchor="middle" direction="rtl">
<text x="81.500" y="20.400">رفتگر شهرداری بجنورد، کیف مفقودی به ارزش ده میلیارد</text>
<text x="81.500" y="27.100">ریال که محتوای طلا، اسناد ملکی، چک و کارت های اعتباری</text>
<text x="81.500" y="33.700">بود را به صاحبش باز گرداند.</text>
</g>
<rect x="36.200" y="46.300" width="100.100" height="62.700" fill="#fff"/>
<ellipse cx="85.800" cy="92.800" rx="50" ry="11.300" fill="#aeaeae"/>
<path d="M92 88 C100 92 104 98 92 103 L70 103 Z" fill="#c8c8c8" opacity=".6"/>
<path d="M40.500 74 L55 71 L57 83 L44 86 Z" fill="#7fc4ae"/><path d="M45 77 L47 76.500 L47.500 80 L45.500 80.500 Z M49 76 L51 75.500 L51.500 79 L49.500 79.500 Z" fill="#fff"/>
<path d="M53.500 66 L66.500 64 L68.500 81 L56 82 Z" fill="#5a8ed0"/><path d="M57 69 L59 68.700 L59.500 72 L57.500 72.300 Z M61.500 68.500 L63.500 68.200 L64 71.500 L62 71.800 Z M58 75 L60 74.700 L60.500 78 L58.500 78.300 Z" fill="#dbe8f8"/>
<path d="M67.500 71.500 L82 70 L82.500 80 L68.500 80.500 Z" fill="#8f9ee0"/><path d="M80.500 76.500 L89 76 L89.500 81 L81 81 Z" fill="#b48ad8"/>
<path d="M88.500 61 L95 60 L98 63 L98 75 L89.500 75 Z" fill="#f4e48a"/>
<path d="M41 68.500 L47 67 L47.500 70 L41.500 71.500 Z" fill="#d8d8d8"/>
<!-- broom -->
<path d="M126 69 L79 89" stroke="#d89a2a" stroke-width="1.200"/>
<path d="M58 88 L79 87.500 L80 96 L60 97.500 Z" fill="#5fae5a"/><path d="M78 86.500 L85 87 L84 93.500 L79 92 Z" fill="#f2761e"/>
<path d="M54 97 L68 96 L66 99 L54 99 Z M72 98 L80 97.500 L79 100 L72 100 Z" fill="#d0d0d0"/>
<!-- sweeper -->
<path d="M97 70 C100 68 111 68 114.500 70 L116 84 L96 84 Z" fill="#f2761e"/><path d="M100 70 L101 83 M111 70 L110 83" stroke="#ddd" stroke-width="1"/>
<path d="M97 84 H113.500 L112.500 93 H99 Z" fill="#55585f"/>
<path d="M93 92 H104 L104 99.500 C100 100.500 94 100 93 98 Z M106 92 H115 L118 98 C116 101 108 101 106 99 Z" fill="#f28a1e"/>
<path d="M114 72 C118 72 124 76 126 80 L122 83 L114 79 Z" fill="#f2761e"/><circle cx="121" cy="77" r="2.200" fill="#f8d0a8"/><circle cx="98" cy="83" r="2.200" fill="#f8d0a8"/>
<ellipse cx="106.500" cy="62" rx="12.500" ry="8.500" fill="#f8d4b0"/>
<path d="M95 57 C97 52 104 49 110 50 L114 57 C108 55 100 55 96 59 Z" fill="#4a4a4a"/>
<path d="M91 54.500 C94 48 104 45 113 47 C120 49 124 54 122.500 60 C116 56 106 53 96 56.500 Z" fill="#f58220"/>
<path d="M100 66 C104 64.500 110 64.500 114 66.500" stroke="#4a4a4a" stroke-width="1.300" fill="none"/><circle cx="98.500" cy="64" r="2" fill="#f4a898"/><circle cx="115.500" cy="64" r="2" fill="#f4a898"/></svg></div>
<div class="num" style="left:808px;top:288.1px;">5</div>
<svg class="abs" style="left:954px;top:289px" width="14" height="12" viewBox="0 0 14 12"><path d="M7.7 2.1 L8.8 5.3 L12.2 5.3 L9.5 7.4 L10.5 10.6 L7.7 8.7 L4.9 10.6 L5.9 7.4 L3.2 5.3 L6.6 5.3 Z" fill="#5a5a5a"/><rect x="2.200" y="3.800" width="1.200" height="1.100" fill="#777"/><rect x="2.200" y="7.300" width="1.200" height="1.100" fill="#777"/></svg>
<div class="thumb" style="left:1001px;top:161px">
<svg viewBox="0 0 160 120" preserveAspectRatio="none"><defs>
<linearGradient id="s6t" x1="0" y1="0" x2="1" y2="0"><stop offset="0" stop-color="#e6c4a2"/><stop offset=".4" stop-color="#d8bc9c"/><stop offset=".6" stop-color="#b89a7a"/><stop offset="1" stop-color="#b09274"/></linearGradient>
<linearGradient id="s6r" x1="0" y1="0" x2="0" y2="1"><stop offset="0" stop-color="#b8aca0"/><stop offset="1" stop-color="#a8a098"/></linearGradient>
<linearGradient id="s6c" x1="0" y1="0" x2="0" y2="1"><stop offset="0" stop-color="#f59aa4"/><stop offset=".6" stop-color="#fac8cc"/><stop offset="1" stop-color="#fde6e6"/></linearGradient>
<linearGradient id="s6w" x1="0" y1="0" x2="0" y2="1"><stop offset="0" stop-color="#d8923e"/><stop offset="1" stop-color="#a8662a"/></linearGradient>
<filter id="s6b2" x="-20%" y="-20%" width="140%" height="140%"><feGaussianBlur stdDeviation="2"/></filter>
<filter id="s6b1" x="-20%" y="-20%" width="140%" height="140%"><feGaussianBlur stdDeviation=".8"/></filter>
<filter id="s6b0" x="-20%" y="-20%" width="140%" height="140%"><feGaussianBlur stdDeviation=".4"/></filter>
</defs>
<rect width="160" height="120" fill="url(#s6t)"/>
<g filter="url(#s6b2)">
<rect x="-5" y="18" width="13" height="36" fill="#7aaa3a"/><rect x="46" y="-4" width="22" height="12" fill="#3a4a5a"/><rect x="100" y="-3" width="65" height="50" fill="#a8896a"/>
<rect x="-5" y="52" width="170" height="75" fill="url(#s6r)"/>

<ellipse cx="56" cy="56" rx="5" ry="6" fill="#b87a6a"/>
</g>
<g filter="url(#s6b1)">
<path d="M-2 121 L41 121 L54 56 L51 55 Z" fill="#e8cc5a"/>
<path d="M70 121 L122 121 L70 68 L63 55 L60 55 Z" fill="#e8cc5a"/>
<path d="M52 121 L57 56" stroke="#6a625a" stroke-width="1" fill="none"/><path d="M0 97.500 L56 97" stroke="#6a625a" stroke-width="1.200" fill="none"/>
<path d="M74 52.500 L162 42 V52 L82 57 Z" fill="#cdc4ba"/><path d="M82 56.500 L162 50.500 V88 L89 59.500 Z" fill="#7d7268"/><path d="M89 59.500 L162 88 V84 L88 58 Z" fill="#5e564e"/>
</g>
<g filter="url(#s6b0)">
<!-- hand -->
<path d="M96 0 C90 10 86 28 84 42 C83 48 87 51 89 46 C91 36 95 24 100 14 L103 26 C102 34 101 42 100.500 48 C101 52 105 52 105.500 47 L108 22 L112 14 C113 22 114 30 115.500 36 C117 39 120 38 119.500 34 L119 8 L128 2 C128 14 129 30 130 42 C131 48 139 48 139 40 C140 26 140 12 141 0 Z" fill="#e49a80"/>
<path d="M131 34 C132 30 137 30 138 34 L138 41 C137 44 132 44 131 41 Z" fill="#f0b8ac"/><path d="M100 14 L108 0 M112 14 L119 0 M119 8 L130 0" stroke="#c47860" stroke-width="1.200" fill="none"/><path d="M96 0 C90 10 86 28 84 42" stroke="#c88468" stroke-width=".8" fill="none"/>
<!-- wallet -->
<path d="M59 86 C62 80 70 76 78 74 C90 70 108 70 118 73 C124 76 126 84 125 94 C124 104 120 112 112 114 C100 115 88 114 80 112 C72 110 62 108 59 104 C57 100 58 92 59 86 Z" fill="url(#s6w)"/>
<path d="M84 82 C94 78 110 78 118 80 C120 86 120 94 117 100 C106 102 94 100 86 96 Z" fill="#5e4238"/>
<path d="M86 90 C96 88 110 88 118 90 M84 97 C96 98 110 99 117 100" stroke="#b07436" stroke-width="1.500" fill="none"/>
<path d="M68 78 C72 76 78 76 80 78 L80 104 C76 106 70 105 68 103 Z" fill="#dc9a48"/>
<path d="M60 102 C66 104 74 108 80 110 L80 113 C72 112 64 109 60 106 Z" fill="#a89048"/>
<path d="M78 74 C80 70 88 69 92 71 L96 74 L84 77 Z" fill="#b8823e"/>
</g>
<!-- callout -->
<path d="M14 4 H78.600 C81.600 4 83.600 6 83.600 9 V43.700 C83.600 46.700 81.600 48.700 78.600 48.700 H39.700 L30.500 54.500 L21.400 48.700 H14 C11 48.700 8.900 46.700 8.900 43.700 V9 C8.900 6 11 4 14 4 Z" fill="url(#s6c)" stroke="#be4b48" stroke-width=".7"/>
<g font-family="DejaVu Sans, sans-serif" font-size="3.700" font-weight="bold" fill="#111" text-anchor="middle" direction="rtl">
<text x="45.800" y="14">راننده تاکسی دانمارکی بعد از پیدا</text>
<text x="45.800" y="21">کردن کیفی پر از پول و طلا در</text>
<text x="45.800" y="27.100">تاکسی اش، پس از ساعتی</text>
<text x="45.800" y="33.700">جستجو، توانست کیف را به</text>
<text x="45.800" y="40.600">پیرزن صاحب کیف برساند.</text>
</g></svg></div>
<div class="num" style="left:1003px;top:288.1px;">6</div>
<svg class="abs" style="left:1149px;top:289px" width="14" height="12" viewBox="0 0 14 12"><path d="M7.7 2.1 L8.8 5.3 L12.2 5.3 L9.5 7.4 L10.5 10.6 L7.7 8.7 L4.9 10.6 L5.9 7.4 L3.2 5.3 L6.6 5.3 Z" fill="#5a5a5a"/><rect x="2.200" y="3.800" width="1.200" height="1.100" fill="#777"/><rect x="2.200" y="7.300" width="1.200" height="1.100" fill="#777"/></svg>
<div class="thumb" style="left:26px;top:333px">
<svg viewBox="0 0 160 120" preserveAspectRatio="none"><defs>
<linearGradient id="s7bg" x1="0" y1="0" x2="0" y2="1"><stop offset="0" stop-color="#b4b4b4"/><stop offset=".5" stop-color="#a2a2a2"/><stop offset="1" stop-color="#8e8e8e"/></linearGradient>
<linearGradient id="s7c" x1="0" y1="0" x2="0" y2="1"><stop offset="0" stop-color="#f6f6f6"/><stop offset="1" stop-color="#b4b4b4"/></linearGradient>
<filter id="s7b2" x="-20%" y="-20%" width="140%" height="140%"><feGaussianBlur stdDeviation="1.600"/></filter>
<filter id="s7b0" x="-20%" y="-20%" width="140%" height="140%"><feGaussianBlur stdDeviation=".4"/></filter>
<filter id="s7n" x="0" y="0" width="100%" height="100%"><feTurbulence type="fractalNoise" baseFrequency=".9" numOctaves="2" seed="3"/><feColorMatrix values="0 0 0 0 0.2  0 0 0 0 0.2  0 0 0 0 0.2  0 0 0 .9 -0.35"/></filter>
</defs>
<rect width="160" height="120" fill="url(#s7bg)"/>
<rect width="160" height="120" filter="url(#s7n)" opacity=".35"/>
<g filter="url(#s7b2)">
<path d="M48 -3 H72 L70 22 L50 20 Z" fill="#5a636e"/>
<path d="M40 24 C46 18 60 18 68 24 L68 38 C58 40 46 38 39 33 Z" fill="#eef0f4"/>
<path d="M0 28 L84 43" stroke="#7e7e7e" stroke-width="1.200" fill="none"/>
</g>
<g filter="url(#s7b0)">
<path d="M60 70 L160 45 M76 72 L160 88" stroke="#767676" stroke-width=".8" fill="none"/>
<path d="M74 77 L96 80 L114 90 L100 97 L74 93 Z" fill="#2a2a2a"/><path d="M76 84 L98 87 L110 91" stroke="#555" stroke-width=".7" fill="none"/>
<path d="M126 44 L160 40 V62 L142 64 C136 60 130 54 126 44 Z" fill="#1e1e1e"/>
<path d="M93 63 C98 60.500 104 60 109 57 C114 52 120 47.500 126 47 L139 55 C141 62 138 70 134 78 C131 86 126 93 118 96.500 C113 98.500 106 98 105 95.500 C105 93.500 109 93 112 92 C116 88 118 82 118.500 76 C117 72 113 69 108 68 C103 67.500 97 68.500 94 67 C92 66 92 64 93 63 Z" fill="#deb092"/>
<path d="M118.500 76 C121 80 121 86 118 91 C116 93 113 93 112 92 C116 88 118 82 118.500 76 Z" fill="#c4906e"/><path d="M126 47 L139 55 C140 60 139 66 136 72 C134 64 130 54 126 47 Z" fill="#e8c0a4"/>
</g>
<path d="M92.200 0.500 H154.300 C157.300 0.500 159.300 2.500 159.300 5.500 V39.600 C159.300 42.600 157.300 44.600 154.300 44.600 H118 L108.400 50.100 L98.900 44.600 H92.200 C89.200 44.600 87.200 42.600 87.200 39.600 V5.500 C87.200 2.500 89.200 0.500 92.200 0.500 Z" fill="url(#s7c)" stroke="#111" stroke-width="1"/>
<path d="M5 71.400 H68.600 C71.600 71.400 73.600 73.400 73.600 76.400 V110.400 C73.600 113.400 71.600 115.400 68.600 115.400 H31 L21.400 120.600 L11.800 115.400 H5 C2 115.400 0.300 113.400 0.300 110.400 V76.400 C0.300 73.400 2 71.400 5 71.400 Z" fill="url(#s7c)" stroke="#111" stroke-width="1"/>
<g font-family="DejaVu Sans, sans-serif" font-size="3.600" font-weight="bold" fill="#111" text-anchor="middle" direction="rtl">
<text x="123.200" y="10">کارمند آموزش و پرورش شهرستان</text>
<text x="123.200" y="16.600">پیرانه غلام امینی شهرستان</text>
<text x="123.200" y="22.700">نظرآباد چند ساعت بعد از پیدا کردن</text>
<text x="123.200" y="29.200">کیف میلیاردی، آن را به دست</text>
<text x="123.200" y="36.100">صاحبش رساند.</text>
<text x="36.700" y="80.700">کارمند شهرداری تهران کیف حاوی</text>
<text x="36.700" y="88">چک، پول نقد و اسناد و مدارک به</text>
<text x="36.700" y="94.100">ارزش دست کم ۳۰۰ میلیون تومان را</text>
<text x="36.700" y="100.500">پیدا کرد و بعد از تلاشش را به کار</text>
<text x="36.700" y="107.100">گرفت تا آن را به صاحبش برگرداند.</text>
</g></svg></div>
<div class="num" style="left:28px;top:460.1px;">7</div>
<svg class="abs" style="left:174px;top:461px" width="14" height="12" viewBox="0 0 14 12"><path d="M7.7 2.1 L8.8 5.3 L12.2 5.3 L9.5 7.4 L10.5 10.6 L7.7 8.7 L4.9 10.6 L5.9 7.4 L3.2 5.3 L6.6 5.3 Z" fill="#5a5a5a"/><rect x="2.200" y="3.800" width="1.200" height="1.100" fill="#777"/><rect x="2.200" y="7.300" width="1.200" height="1.100" fill="#777"/></svg>
<div class="thumb" style="left:221px;top:333px">
<svg viewBox="0 0 160 120" preserveAspectRatio="none"><defs>
<linearGradient id="s8g" x1="0" y1="0" x2="0" y2="1"><stop offset="0" stop-color="#d3e6a6"/><stop offset="1" stop-color="#eff6dc"/></linearGradient>
<linearGradient id="s8q" x1="0" y1="0" x2="1" y2="1"><stop offset="0" stop-color="#a8dcfa"/><stop offset="1" stop-color="#4a9ee0"/></linearGradient>
</defs>
<rect width="160" height="120" fill="#f2dcdb"/>
<g fill="url(#s8g)" stroke="#9bbb59" stroke-width=".7">
<rect x="46.300" y="5.200" width="109.100" height="15.300"/><rect x="11.800" y="65.800" width="140.500" height="8.400"/><rect x="20.900" y="82" width="127.600" height="12.500"/>
</g>
<g font-family="DejaVu Sans, sans-serif" font-weight="bold" fill="#111" text-anchor="middle" direction="rtl">
<text x="101" y="10.900" font-size="3.700">پس از خواندن خبرهای صفحه ی قبل، چه پرس شهایی در</text>
<text x="101" y="16.300" font-size="3.700">ذهن شما مطرح شد؟ دو مورد را بنویسید.</text>
<text x="82.300" y="70.600" font-size="3.700">آیا اعضای خانواده ی رفتگر نیز موافق پس دادن کیف به صاحبش بودند؟</text>
<text x="85" y="86.400" font-size="3">مامور کوشید بعد از گرفتن کیفش چه پاداشی به رفتگر داد و چگونه از او تشکر و</text>
<text x="85" y="91.800" font-size="3">قدردانی نمود؟</text>
</g>
<!-- question box icon -->
<path d="M10 45 L22 39 L37 42 L34 55 L22 55.400 L14 52 Z" fill="#1f74dc"/>
<path d="M14 44 L22 40.500 L33 42.500 L24 46.500 Z" fill="#f0a020"/>
<path d="M10 45 L24 46.500 L22 55.400 L14 52 Z" fill="#2a86e8"/><path d="M24 46.500 L37 42 L34 55 L22 55.400 Z" fill="#165ec0"/>
<path d="M18.500 24.500 C18 17.500 30 16.500 30 24 C30 29.500 24.200 30 24 37" fill="none" stroke="url(#s8q)" stroke-width="4.400" stroke-linecap="round"/>
<path d="M19.500 23 C20 19.500 25 18.500 27.500 20.500" fill="none" stroke="#d4eefc" stroke-width="1.200" stroke-linecap="round" opacity=".8"/>
<ellipse cx="23.500" cy="43" rx="3" ry="3.400" fill="#b8e0fa"/></svg></div>
<div class="num" style="left:223px;top:460.1px;">8</div>
<svg class="abs" style="left:369px;top:461px" width="14" height="12" viewBox="0 0 14 12"><path d="M7.7 2.1 L8.8 5.3 L12.2 5.3 L9.5 7.4 L10.5 10.6 L7.7 8.7 L4.9 10.6 L5.9 7.4 L3.2 5.3 L6.6 5.3 Z" fill="#5a5a5a"/><rect x="2.200" y="3.800" width="1.200" height="1.100" fill="#777"/><rect x="2.200" y="7.300" width="1.200" height="1.100" fill="#777"/></svg>
<div class="thumb" style="left:416px;top:333px">
<svg viewBox="0 0 160 120" preserveAspectRatio="none"><defs>
<linearGradient id="s9t" x1="0" y1="0" x2="0" y2="1"><stop offset="0" stop-color="#f79aa2"/><stop offset="1" stop-color="#fcdada"/></linearGradient>
<linearGradient id="s9a" x1="0" y1="0" x2="1" y2="1"><stop offset="0" stop-color="#c41414"/><stop offset="1" stop-color="#8a0404"/></linearGradient>
<radialGradient id="s9m" cx=".4" cy=".3" r=".8"><stop offset="0" stop-color="#f4f4f4"/><stop offset="1" stop-color="#9a9a9a"/></radialGradient>
</defs>
<rect width="160" height="120" fill="#d7e4bd"/>
<rect x="40.600" y="0.300" width="82.100" height="11" fill="url(#s9t)" stroke="#be4b48" stroke-width=".7"/>
<g fill="url(#s9a)">
<path d="M64.500 31.500 C60 18 48 8 36 13 C24 18 18 32 20 45 L15 44 L24 49.500 L30 39 L25 41.500 C23 32 28 22 37 20 C46 18 54 26 57.500 35 Z"/>
<path d="M94 38 C95 26 104 18 116 18 C127 18 134 26 137.500 34.500 L141.500 33 L138.500 44 L128 38.500 L133 36.500 C130 29 124 23.500 116 23.500 C106 23.500 100 30 99 38 Z"/>
<path d="M118.500 63.500 C134 64 148 72 148 86 C148 98 138 106 128 107 L129 112 L118 105 L127 96 L127.500 101 C135 100 142 94 141.500 86 C141 77 130 72 119 71.500 Z"/>
<path d="M37.500 60.500 C24 62 12 72 13 88 C14 102 24 112 34 114 L33.500 118 L44 113.500 L36 104.500 L35.500 109 C27 107 19 99 19 88 C19 76 28 68 37.500 67.500 Z"/>
</g>
<rect x="54.100" y="38.300" width="50.900" height="50.500" fill="#fff"/>
<ellipse cx="82" cy="80" rx="16" ry="3" fill="#ddd"/>
<path d="M66 62 C64 56 70 52 75 55 C79 58 77 64 74 67 L72 71 L67 69 C68 66 71 63 70 61 Z" fill="#d81e1e"/>
<path d="M82 60 C88 62 94 70 96 74 L90 78 C88 72 84 66 80 64 Z" fill="#d81e1e"/><ellipse cx="95.500" cy="79.500" rx="4.500" ry="3.500" fill="#d81e1e"/>
<circle cx="76.500" cy="52" r="6" fill="url(#s9m)"/>
<path d="M73 58 C77 57 81 58 82 62 L82 70 L83.500 79 L79 80 L78 73 L76.500 80 L72 79.500 L73.500 70 Z" fill="url(#s9m)"/>
<path d="M80 56 C83 54 84 50 82.500 47" stroke="#888" stroke-width=".8" fill="none"/>
<g font-family="DejaVu Sans, sans-serif" font-weight="bold" fill="#111" text-anchor="middle" direction="rtl">
<text x="81.500" y="3.800" font-size="3.500">خود را به جای شخصیت های این خبرها قرار دهید.</text>
<text x="81.500" y="9.200" font-size="3.500">چه احساسی در شما پیدا می شود؟</text>
<text x="22.800" y="54" font-size="2.900">اگر من به جای یابنده</text>
<text x="22.800" y="58.900" font-size="2.900">کیف بودم:</text>
<text x="139" y="39.600" font-size="2.900">اگر من به جای صاحب</text>
<text x="139" y="44.800" font-size="2.900">کیف بودم:</text>
<text x="105" y="98" font-size="2.800">پاسخ‌ها برگرفتن کیف</text>
<text x="69.300" y="101.800" font-size="2.800" textLength="94" lengthAdjust="spacingAndGlyphs">از قبیل:ناامیدی،ترس،نگرانی، احساس گناه، و خوب و یا ناامید هم می ساختم</text>
<text x="98" y="114.500" font-size="2.800" textLength="119" lengthAdjust="spacingAndGlyphs">احساس گناه مانع می گردد، کاش مواظب بودم، پسیند رسانی کیف به صاحبش آرام شده است</text>
</g></svg></div>
<div class="num" style="left:418px;top:460.1px;">9</div>
<svg class="abs" style="left:564px;top:461px" width="14" height="12" viewBox="0 0 14 12"><path d="M7.7 2.1 L8.8 5.3 L12.2 5.3 L9.5 7.4 L10.5 10.6 L7.7 8.7 L4.9 10.6 L5.9 7.4 L3.2 5.3 L6.6 5.3 Z" fill="#5a5a5a"/><rect x="2.200" y="3.800" width="1.200" height="1.100" fill="#777"/><rect x="2.200" y="7.300" width="1.200" height="1.100" fill="#777"/></svg>
<div class="thumb" style="left:611px;top:333px">
<svg viewBox="0 0 160 120" preserveAspectRatio="none"><defs><linearGradient id="s10q" x1="0" y1="0" x2="1" y2="1"><stop offset="0" stop-color="#5ab0ea"/><stop offset=".5" stop-color="#2a7cc4"/><stop offset="1" stop-color="#174a88"/></linearGradient></defs>
<rect width="160" height="120" fill="#bfbfbf"/>
<g fill="#4f81bd" stroke="#fff" stroke-width=".9">
<path d="M19.800 8 H140.100 C140.100 10.500 141.600 12 144.100 12 V23 C141.600 23 140.100 24.500 140.100 27 H19.800 C19.800 24.500 18.300 23 15.800 23 V12 C18.300 12 19.800 10.500 19.800 8 Z"/>
<path d="M19.800 91 H140.100 C140.100 93.500 141.600 95 144.100 95 V105.800 C141.600 105.800 140.100 107.300 140.100 109.800 H19.800 C19.800 107.300 18.300 105.800 15.800 105.800 V95 C18.300 95 19.800 93.500 19.800 91 Z"/>
</g>
<g font-family="DejaVu Sans, sans-serif" font-weight="bold" font-size="4" fill="#fff" text-anchor="middle" direction="rtl">
<text x="80" y="15.300">چه تصمیمی می گرفتم؟</text>
<text x="80" y="21.900">اگر من به جای یابنده ی کیف بودم</text>
<text x="80" y="98.500">۱- مقداری از پول را نذر کمک به ایتام می کردم</text>
<text x="80" y="105">۲- به طور شایسته ای از رفتگر قدردانی می نمودم</text>
</g>
<path d="M72.500 51 C72 45 77 42.300 82.500 42.500 C88.500 42.800 92.500 46 92 51 C91.500 55.500 86 57.500 84.500 61 L84.500 63 L79.500 63 L79.500 60 C80 55.500 86 54 86.500 50.500 C86.800 48 84.500 46.800 82.500 46.800 C80 46.800 78 48.500 78 51.500 Z" fill="url(#s10q)" stroke="#174a88" stroke-width=".4"/>
<circle cx="81.800" cy="67.300" r="3" fill="url(#s10q)" stroke="#174a88" stroke-width=".4"/></svg></div>
<div class="num" style="left:613px;top:460.1px;">10</div>
<svg class="abs" style="left:759px;top:461px" width="14" height="12" viewBox="0 0 14 12"><path d="M7.7 2.1 L8.8 5.3 L12.2 5.3 L9.5 7.4 L10.5 10.6 L7.7 8.7 L4.9 10.6 L5.9 7.4 L3.2 5.3 L6.6 5.3 Z" fill="#5a5a5a"/><rect x="2.200" y="3.800" width="1.200" height="1.100" fill="#777"/><rect x="2.200" y="7.300" width="1.200" height="1.100" fill="#777"/></svg>
<div class="thumb" style="left:806px;top:333px">
<svg viewBox="0 0 160 120" preserveAspectRatio="none"><defs>
<linearGradient id="s11t" x1="0" y1="0" x2="0" y2="1"><stop offset="0" stop-color="#f7949c"/><stop offset="1" stop-color="#fde2e2"/></linearGradient>
<linearGradient id="s11a" x1="0" y1="0" x2="0" y2="1"><stop offset="0" stop-color="#fbd28e"/><stop offset="1" stop-color="#f4a250"/></linearGradient>
<linearGradient id="s11b" x1="0" y1="0" x2="0" y2="1"><stop offset="0" stop-color="#d8f86e"/><stop offset="1" stop-color="#b0e84a"/></linearGradient>
<linearGradient id="s11c" x1="0" y1="0" x2="0" y2="1"><stop offset="0" stop-color="#78ee82"/><stop offset="1" stop-color="#3cc85a"/></linearGradient>
<linearGradient id="s11d" x1="0" y1="0" x2="0" y2="1"><stop offset="0" stop-color="#62c4e2"/><stop offset="1" stop-color="#3aa2c8"/></linearGradient>
</defs>
<rect width="160" height="120" fill="#404040"/>
<rect x="41.400" y="12.200" width="77.500" height="10.400" fill="url(#s11t)" stroke="#c8403e" stroke-width=".7"/>
<path d="M43.500 34.500 L118 31.300 V41.800 L43.500 43.200 Z" fill="url(#s11a)"/>
<path d="M76.500 42.500 H79.500 V44.500 H81.500 L78 48.500 L74.500 44.500 H76.500 Z" fill="#f4a250"/>
<path d="M43.500 48.700 L118 47 V57.400 L43.500 57.400 Z" fill="url(#s11b)"/>
<path d="M76.500 57.400 H79.500 V59.500 H81.500 L78 63.500 L74.500 59.500 H76.500 Z" fill="#b0e84a"/>
<path d="M43.500 63.200 L118 63.200 V73.600 L43.500 71.900 Z" fill="url(#s11c)"/>
<path d="M76.500 72.500 H79.500 V74.500 H81.500 L78 78.500 L74.500 74.500 H76.500 Z" fill="#3cc85a"/>
<path d="M43.500 77.600 L118 78.900 V88.800 L43.500 85.800 Z" fill="url(#s11d)"/>
<g font-family="DejaVu Sans, sans-serif" font-weight="bold" fill="#111" text-anchor="middle" direction="rtl">
<text x="80" y="18.200" font-size="4.100">اگر من به جای صاحب کیف بودم</text>
<text x="79" y="38.700" font-size="2.800" textLength="42" lengthAdjust="spacingAndGlyphs" transform="rotate(-1.800 79 38)">به دنبال کیف، کارهایم را با تاکسی می رفتم</text>
<text x="79" y="53.800" font-size="2.800" transform="rotate(-.600 79 53)">با تاکسی تلفنی تماس میگرفتم</text>
<text x="79" y="69" font-size="2.800" textLength="58" lengthAdjust="spacingAndGlyphs" transform="rotate(.600 79 69)">به رفتگر کار هایش را به اطلاع همه شاد می‌باشد قبول کند داده</text>
<text x="79" y="84.200" font-size="2.800" transform="rotate(1.600 79 84)">برای تقدیر و سپاس از رفتگر باید تلاش کنم</text>
</g></svg></div>
<div class="num" style="left:808px;top:460.1px;">11</div>
<svg class="abs" style="left:954px;top:461px" width="14" height="12" viewBox="0 0 14 12"><path d="M7.7 2.1 L8.8 5.3 L12.2 5.3 L9.5 7.4 L10.5 10.6 L7.7 8.7 L4.9 10.6 L5.9 7.4 L3.2 5.3 L6.6 5.3 Z" fill="#5a5a5a"/><rect x="2.200" y="3.800" width="1.200" height="1.100" fill="#777"/><rect x="2.200" y="7.300" width="1.200" height="1.100" fill="#777"/></svg>
<div class="thumb" style="left:1001px;top:333px">
<svg viewBox="0 0 160 120" preserveAspectRatio="none"><defs>
<linearGradient id="s12q" x1="0" y1="0" x2="1" y2="1"><stop offset="0" stop-color="#a8dcfa"/><stop offset="1" stop-color="#4a9ee0"/></linearGradient>
<pattern id="s12p" width="3" height="3" patternUnits="userSpaceOnUse"><rect width="3" height="3" fill="#e7cb88"/><rect width="1" height="3" fill="#dcbc74" opacity=".45"/><rect width="3" height="1" fill="#f0d89c" opacity=".35"/></pattern>
</defs>
<rect width="160" height="120" fill="#fde9d9"/>
<rect y="48.400" width="160" height="71.600" fill="url(#s12p)"/>
<path d="M61 31 L74 25 L89.300 28 L86 41.500 L73.500 42.300 L65.500 38.500 Z" fill="#1f74dc"/>
<path d="M65 30 L74 26.500 L85 28.500 L75.500 32.500 Z" fill="#f0a020"/>
<path d="M61 31 L75.500 32.500 L73.500 42.300 L65.500 38.500 Z" fill="#2a86e8"/><path d="M75.500 32.500 L89.300 28 L86 41.500 L73.500 42.300 Z" fill="#165ec0"/>
<path d="M69.500 11.500 C69 4.500 81 3.500 81 11 C81 16.500 75.500 17 75.300 24" fill="none" stroke="url(#s12q)" stroke-width="4.600" stroke-linecap="round"/>
<path d="M70.500 10 C71 6.500 76 5.500 78.500 7.500" fill="none" stroke="#d4eefc" stroke-width="1.200" stroke-linecap="round" opacity=".8"/>
<ellipse cx="75" cy="29.500" rx="3.200" ry="3.600" fill="#b8e0fa"/>
<path d="M19 83.200 H141.600 C141.600 87 143.800 89.200 147.600 89.200 V106.800 C143.800 106.800 141.600 109 141.600 112.800 H19 C19 109 16.800 106.800 13 106.800 V89.200 C16.800 89.200 19 87 19 83.200 Z" fill="#f79646" stroke="#fff" stroke-width=".9"/>
<g font-family="DejaVu Sans, sans-serif" font-weight="bold" text-anchor="middle" direction="rtl">
<text x="80" y="65.600" font-size="4.500" fill="#111" textLength="147" lengthAdjust="spacingAndGlyphs">• فرض کنید این کیف متعلق به یکی از اعضای خانواده ی شما است. از</text>
<text x="80" y="73.500" font-size="4.500" fill="#111">یابنده ی آن چه انتظاری دارید؟ چرا؟</text>
<text x="80" y="92" font-size="4.200" fill="#fff">فرد امانت داری باشد و کیف را صحیح و سالم به صاحبش</text>
<text x="80" y="99.500" font-size="4.200" fill="#fff">برساند. حال فرق نمی کند که این فرد از اعضای خانواده ام</text>
<text x="80" y="107" font-size="4.200" fill="#fff">باشد یا نباشد.</text>
</g></svg></div>
<div class="num" style="left:1003px;top:460.1px;">12</div>
<svg class="abs" style="left:1149px;top:461px" width="14" height="12" viewBox="0 0 14 12"><path d="M7.7 2.1 L8.8 5.3 L12.2 5.3 L9.5 7.4 L10.5 10.6 L7.7 8.7 L4.9 10.6 L5.9 7.4 L3.2 5.3 L6.6 5.3 Z" fill="#5a5a5a"/><rect x="2.200" y="3.800" width="1.200" height="1.100" fill="#777"/><rect x="2.200" y="7.300" width="1.200" height="1.100" fill="#777"/></svg>
<div class="thumb" style="left:26px;top:505px">
<svg viewBox="0 0 160 120" preserveAspectRatio="none"><defs>
<linearGradient id="s13t" x1="0" y1="0" x2="0" y2="1"><stop offset="0" stop-color="#f79aa2"/><stop offset="1" stop-color="#fcdada"/></linearGradient>
</defs>
<rect width="160" height="120" fill="#c4bd97"/>
<rect x="21" y="7.100" width="108.900" height="12.600" fill="url(#s13t)" stroke="#c0403e" stroke-width=".7"/>
<text x="75.500" y="11" font-family="DejaVu Sans, sans-serif" font-weight="bold" font-size="3.400" fill="#111" text-anchor="middle" direction="rtl" textLength="100" lengthAdjust="spacingAndGlyphs">برای تصمیم گیری در چنین موقعیت هایی چه دوراهی فکر دارد؟</text>
<path d="M41.500 37.600 L78 45 V23.700 L105 62.300 L78 100.600 V80.500 L41.500 74.500 Z" fill="#e6ecda" opacity=".9"/>
<path d="M99.400 55 C99.400 53 101 51.900 103 52 L116 54.500 C118 55 119.200 56 119.200 58 V82 C119.200 84 118 85.200 116 85 L103 82 C101 81.500 99.400 80.500 99.400 78.500 Z" fill="#c6d6b2" stroke="#e4ecd8" stroke-width=".8"/>
<path d="M77.100 52 C77.100 50 78.500 49.200 80.500 49.400 L93 51.500 C95 52 96.300 53 96.300 55 V78.500 C96.300 80.500 95 81.700 93 81.500 L80.500 79 C78.500 78.600 77.100 77.500 77.100 75.500 Z" fill="#aec68e" stroke="#dde8cc" stroke-width=".8"/>
<path d="M54.800 48 C54.800 46 56.200 44.800 58.200 45 L70.500 47 C72.500 47.400 74 48.500 74 50.500 V75 C74 77 72.500 78.200 70.500 78 L58.200 75.500 C56.200 75 54.800 74 54.800 72 Z" fill="#9cb878" stroke="#d4e2c0" stroke-width=".8"/>
<path d="M32.700 45.500 C32.700 43.500 34 42.200 36 42.400 L48.500 44 C50.500 44.400 51.900 45.500 51.900 47.500 V71.500 C51.900 73.500 50.500 74.700 48.500 74.500 L36 72 C34 71.600 32.700 70.500 32.700 68.500 Z" fill="#88a65c" stroke="#cddcb6" stroke-width=".8"/>
<g font-family="DejaVu Sans, sans-serif" font-size="2.300" fill="#f4f8ec" text-anchor="middle" direction="rtl">
<text x="42.300" y="50">به این موضوع</text><text x="42.300" y="54">فکر کنم که</text><text x="42.300" y="58">چه چیزی درست</text><text x="42.300" y="62">و چه چیزی غلط</text><text x="42.300" y="66">است و بعد</text><text x="42.300" y="70">تصمیم بگیرم</text>
<text x="64.400" y="54">عواقب کارم را</text><text x="64.400" y="58">در نظر بگیرم</text><text x="64.400" y="62">خوب و بد آن</text><text x="64.400" y="66">را بسنجم و بعد</text><text x="64.400" y="70">تصمیم بگیرم</text>
<text x="86.700" y="60">با بزرگترها</text><text x="86.700" y="64">مشورت</text><text x="86.700" y="68">کنم</text><text x="86.700" y="74">و راهنمایی بگیرم</text>
<text x="109.300" y="60">خودم را جای</text><text x="109.300" y="64">دیگران</text><text x="109.300" y="68">بگذارم و فکر</text><text x="109.300" y="72">کنم چه انتظاری</text><text x="109.300" y="76">از من</text><text x="109.300" y="80">دارند</text>
</g></svg></div>
<div class="num" style="left:28px;top:632.1px;">13</div>
<svg class="abs" style="left:174px;top:633px" width="14" height="12" viewBox="0 0 14 12"><path d="M7.7 2.1 L8.8 5.3 L12.2 5.3 L9.5 7.4 L10.5 10.6 L7.7 8.7 L4.9 10.6 L5.9 7.4 L3.2 5.3 L6.6 5.3 Z" fill="#5a5a5a"/><rect x="2.200" y="3.800" width="1.200" height="1.100" fill="#777"/><rect x="2.200" y="7.300" width="1.200" height="1.100" fill="#777"/></svg>
<div class="thumb" style="left:221px;top:505px">
<svg viewBox="0 0 160 120" preserveAspectRatio="none"><defs>
<filter id="s14b4" x="-30%" y="-30%" width="160%" height="160%"><feGaussianBlur stdDeviation="4"/></filter>
<filter id="s14b0" x="-30%" y="-30%" width="160%" height="160%"><feGaussianBlur stdDeviation=".700"/></filter>
<filter id="s14b1" x="-30%" y="-30%" width="160%" height="160%"><feGaussianBlur stdDeviation="1.400"/></filter>
<linearGradient id="s14bg" x1="0" y1="0" x2="1" y2="1"><stop offset="0" stop-color="#cfe8a4"/><stop offset=".5" stop-color="#d8eec0"/><stop offset="1" stop-color="#c4e49a"/></linearGradient>
</defs>
<rect width="160" height="120" fill="url(#s14bg)"/>
<g filter="url(#s14b4)">
<ellipse cx="20" cy="20" rx="22" ry="16" fill="#e4f2d0"/><ellipse cx="140" cy="16" rx="24" ry="12" fill="#cfe8a8"/><ellipse cx="150" cy="60" rx="12" ry="24" fill="#cfeae0"/>
<ellipse cx="14" cy="70" rx="12" ry="20" fill="#b8e088"/><ellipse cx="130" cy="100" rx="24" ry="14" fill="#c0e494"/><ellipse cx="60" cy="110" rx="20" ry="12" fill="#9cd460"/>
<ellipse cx="90" cy="60" rx="44" ry="40" fill="#f4faf0"/><ellipse cx="120" cy="50" rx="22" ry="18" fill="#f8fcf4"/><ellipse cx="126" cy="108" rx="20" ry="10" fill="#eef8e4"/>
</g>
<g filter="url(#s14b1)">
<ellipse cx="42" cy="72" rx="7" ry="8" fill="#f2c4cc"/><ellipse cx="58" cy="98" rx="7.500" ry="7.500" fill="#f2bcc8"/><ellipse cx="66" cy="29" rx="7" ry="6" fill="#f4d0d8"/><ellipse cx="38" cy="98" rx="5" ry="6" fill="#f0ccd2"/><ellipse cx="83" cy="27" rx="4" ry="4" fill="#f4d4da"/>
<path d="M98 56 C108 50 120 54 126 66 C116 74 104 70 98 56 Z" fill="#b0de7c"/><path d="M48 100 C58 104 64 112 64 122 L42 122 C42 112 44 104 48 100 Z" fill="#86cc50"/><path d="M40 54 C44 50 52 50 54 54 L48 62 Z" fill="#a4da74"/>
<path d="M70 92 C74 100 84 110 90 122 L78 122 C76 110 72 100 70 92 Z" fill="#84c850"/><path d="M120 96 C130 92 140 96 146 104 C136 108 126 106 120 96 Z" fill="#a8dc7c"/>
</g>
<g filter="url(#s14b0)" opacity=".96">
<ellipse cx="60" cy="50" rx="9" ry="12" fill="#fdfefb" transform="rotate(-30 60 50)"/><ellipse cx="74" cy="46" rx="8" ry="12" fill="#fbfdf8" transform="rotate(10 74 46)"/><ellipse cx="66" cy="66" rx="10" ry="9" fill="#f8fcf4"/><ellipse cx="82" cy="62" rx="9" ry="11" fill="#fdfefb" transform="rotate(30 82 62)"/><ellipse cx="94" cy="46" rx="10" ry="12" fill="#fcfefa" transform="rotate(-20 94 46)"/>
<ellipse cx="112" cy="34" rx="10" ry="9" fill="#fafdf6"/><ellipse cx="126" cy="42" rx="9" ry="11" fill="#fdfefb" transform="rotate(30 126 42)"/><ellipse cx="132" cy="60" rx="10" ry="9" fill="#f8fcf4"/><ellipse cx="112" cy="50" rx="8" ry="8" fill="#fbfdf8"/>
<ellipse cx="58" cy="86" rx="12" ry="8" fill="#fbfdf8" transform="rotate(-20 58 86)"/><ellipse cx="80" cy="84" rx="9" ry="12" fill="#fdfefb" transform="rotate(-10 80 84)"/><ellipse cx="98" cy="92" rx="13" ry="10" fill="#fafdf6"/><ellipse cx="88" cy="108" rx="10" ry="12" fill="#fcfefa"/><ellipse cx="108" cy="108" rx="10" ry="9" fill="#f6fbf0"/><ellipse cx="124" cy="112" rx="12" ry="8" fill="#f8fcf4"/>
<ellipse cx="92" cy="88" rx="4.500" ry="2.800" fill="#e4ea88"/><ellipse cx="68" cy="62" rx="3.500" ry="2.600" fill="#ecf09c"/><ellipse cx="116" cy="46" rx="3" ry="2.400" fill="#ecf09c"/>
</g>
<g font-family="DejaVu Sans, sans-serif" font-weight="bold" font-size="3.500" fill="#222" text-anchor="middle" direction="rtl">
<text x="80" y="30.900">آیا مقدار مال پیدا شده در ارزش و تصمیم برگرداندن آن به صاحبش</text>
<text x="80" y="37.800">اثر دارد؟ چرا آری، چرا نه؟</text>
<text x="78.300" y="70.600">بله، اگر مال پیدا شده کم باشد می توان از طرف صاحب مال آن را</text>
<text x="78.300" y="76.700">صدقه داد.</text>
</g>
<path d="M61 52.500 C60 50 64 50 65 53 C68 56 72 54.500 76 54.500 M82 54.500 C86 54.500 92 53 95 56 C97 58 95 59 94 57" fill="none" stroke="#3a5a9a" stroke-width=".5"/>
<circle cx="76" cy="54.300" r="2" fill="#7a3a9a"/><circle cx="79" cy="53.600" r="2.200" fill="#3a5ad8"/><circle cx="82" cy="54.600" r="2" fill="#b83a6a"/><circle cx="77.500" cy="56" r="1.400" fill="#3a8a3a"/><circle cx="80.500" cy="56.300" r="1.400" fill="#3a8a3a"/>
<!-- man -->
<path d="M19 93 L32.500 82.500" stroke="#555" stroke-width=".5"/>
<ellipse cx="8" cy="85.500" rx="5" ry="6.500" fill="#e0a888"/><path d="M3 82 C4 78 10 77 13 80 L12 82 C9 81 6 81 4 84 Z" fill="#8a5a3a"/>
<path d="M4 92 C8 90 13 91 15 94 L19 93 L19.500 95 L15 97 L16 104 L3 104 Z" fill="#1a2250"/>
<path d="M4 104 H14 L12 115 H5 Z" fill="#c8a870"/><path d="M4 115 H13 C15 115 16 117 14 117.500 H4 Z" fill="#1a1a1a"/>
<circle cx="13.500" cy="101" r="2" fill="#e0a888"/></svg></div>
<div class="num" style="left:223px;top:632.1px;">14</div>
<svg class="abs" style="left:369px;top:633px" width="14" height="12" viewBox="0 0 14 12"><path d="M7.7 2.1 L8.8 5.3 L12.2 5.3 L9.5 7.4 L10.5 10.6 L7.7 8.7 L4.9 10.6 L5.9 7.4 L3.2 5.3 L6.6 5.3 Z" fill="#5a5a5a"/><rect x="2.200" y="3.800" width="1.200" height="1.100" fill="#777"/><rect x="2.200" y="7.300" width="1.200" height="1.100" fill="#777"/></svg>
<div class="thumb" style="left:416px;top:505px">
<svg viewBox="0 0 160 120" preserveAspectRatio="none"><rect width="160" height="120" fill="#fff"/>
<text x="80.600" y="11.500" font-family="DejaVu Sans, sans-serif" font-size="8" fill="#1a1aff" text-anchor="middle" direction="rtl">سوالات</text>
<rect x="50" y="23.700" width="62" height="2.400" fill="#c8c8c8" stroke="#aaa" stroke-width=".3"/>
<!-- cubes -->
<g transform="rotate(-28 43.200 33)"><rect x="32" y="22" width="22" height="22" fill="#4a78b4"/><path d="M54 22 L58 25 V47 L54 44 Z" fill="#34588a"/><path d="M32 44 L54 44 L58 47 L36 47 Z" fill="#3a6298"/></g>
<g transform="rotate(-28 80.600 33)"><rect x="69.500" y="22" width="22" height="22" fill="#86b414"/><path d="M91.500 22 L95.500 25 V47 L91.500 44 Z" fill="#6a9010"/><path d="M69.500 44 L91.500 44 L95.500 47 L73.500 47 Z" fill="#74a010"/></g>
<g transform="rotate(-28 120.600 32)"><rect x="109.500" y="21" width="22" height="22" fill="#0e8a8a"/><path d="M131.500 21 L135.500 24 V46 L131.500 43 Z" fill="#0a6464"/><path d="M109.500 43 L131.500 43 L135.500 46 L113.500 46 Z" fill="#0c7272"/></g>
<g font-family="DejaVu Sans, sans-serif" font-weight="bold" font-size="9" fill="#111" text-anchor="middle">
<text x="41.500" y="36.500">۳</text><text x="78.500" y="36.500">۲</text><text x="118" y="36">۱</text>
</g>
<rect x="17.900" y="49.800" width="39.200" height="66.200" fill="#ffccff"/>
<rect x="59.400" y="49.800" width="37.200" height="66.200" fill="#cceeff"/>
<rect x="101" y="49.800" width="37.400" height="66.200" fill="#ffff66"/>
<g font-family="DejaVu Sans, sans-serif" font-weight="bold" font-size="3.300" text-anchor="middle" direction="rtl">
<g fill="#111">
<text x="38" y="56">اگر صاحب مال جای</text><text x="38" y="61">کسی به عنوان</text><text x="38" y="66">مژدگانی داده، چه</text><text x="38" y="72">قضاوتی درباره ی</text><text x="38" y="77">او می کنید؟ چرا؟</text>
<text x="77" y="54.500">آیا اصولاً انتظار</text><text x="77" y="60">دریافت مژدگانی</text><text x="77" y="65">برای پس دادن</text><text x="77" y="70.500">مال، درست</text><text x="77" y="75.500">است؟</text>
<text x="119" y="55">آیا برای تعیین میزان</text><text x="119" y="60">مژدگانی باید به</text><text x="119" y="65">مقدار مالی که</text><text x="119" y="70.500">پیدا شده توجه</text><text x="119" y="75.500">کرد؟ چرا آری،</text><text x="119" y="80.500">چرا نه؟</text>
</g>
<g fill="#e81a1a"><text x="40" y="90.500">قضاوتی نمی کنم،</text><text x="40" y="96">چون اختیار ی از او</text><text x="40" y="101.500">ندارم.</text></g>
<g fill="#f08a1a"><text x="78" y="89">خیر، چون ایجابی</text><text x="78" y="94">مژدگانی برای ما</text><text x="78" y="99">ضمان رضایت</text><text x="78" y="104.500">خداوند است.</text></g>
<g fill="#f08a1a"><text x="120" y="88">خیر، چون برگرداندن</text><text x="120" y="93">شده به جزئی ان</text><text x="120" y="98">از وظایف ماست و</text><text x="120" y="104">میزان آن دخلی به</text><text x="120" y="109">هر تصمیم به این</text><text x="120" y="114.500">امر ندارد.</text></g>
</g></svg></div>
<div class="num" style="left:418px;top:632.1px;">15</div>
<svg class="abs" style="left:564px;top:633px" width="14" height="12" viewBox="0 0 14 12"><path d="M7.7 2.1 L8.8 5.3 L12.2 5.3 L9.5 7.4 L10.5 10.6 L7.7 8.7 L4.9 10.6 L5.9 7.4 L3.2 5.3 L6.6 5.3 Z" fill="#5a5a5a"/><rect x="2.200" y="3.800" width="1.200" height="1.100" fill="#777"/><rect x="2.200" y="7.300" width="1.200" height="1.100" fill="#777"/></svg>
<div class="thumb" style="left:611px;top:505px">
<svg viewBox="0 0 160 120" preserveAspectRatio="none"><defs>
<linearGradient id="s16sky" x1="0" y1="0" x2="0" y2="1"><stop offset="0" stop-color="#b4cade"/><stop offset=".5" stop-color="#cddceb"/><stop offset="1" stop-color="#e8eef4"/></linearGradient>
<linearGradient id="s16gr" x1="0" y1="0" x2="0" y2="1"><stop offset="0" stop-color="#b4b6b8"/><stop offset=".4" stop-color="#8e9092"/><stop offset="1" stop-color="#7a7c7e"/></linearGradient>
<linearGradient id="s16c" x1="0" y1="0" x2="0" y2="1"><stop offset="0" stop-color="#f6f6f6"/><stop offset="1" stop-color="#b8b8b8"/></linearGradient>
<radialGradient id="s16gl" cx=".5" cy=".5" r=".5"><stop offset="0" stop-color="#fff"/><stop offset="1" stop-color="#fff" stop-opacity="0"/></radialGradient>
<filter id="s16b" x="-20%" y="-20%" width="140%" height="140%"><feGaussianBlur stdDeviation=".5"/></filter>
<filter id="s16b2" x="-20%" y="-20%" width="140%" height="140%"><feGaussianBlur stdDeviation="2.500"/></filter>
</defs>
<rect width="160" height="120" fill="url(#s16sky)"/>
<g filter="url(#s16b2)"><ellipse cx="40" cy="8" rx="40" ry="6" fill="#a8bed4"/><ellipse cx="120" cy="20" rx="30" ry="8" fill="#e0e8f0"/><ellipse cx="70" cy="40" rx="20" ry="8" fill="#e8eef4"/></g>
<path d="M0 54 C20 50 50 50 70 56 L90 56 C110 50 140 48 160 54 V120 H0 Z" fill="url(#s16gr)"/>
<ellipse cx="80" cy="52" rx="22" ry="14" fill="url(#s16gl)"/>
<g filter="url(#s16b)" fill="none">
<path d="M0 62 C20 56 50 60 68 68 M8 74 C30 66 56 72 66 80 M50 56 C60 60 70 62 74 66 M96 60 C110 54 130 56 160 64 M100 72 C116 66 140 70 160 78" stroke="#c8caca" stroke-width="1.200"/>
<path d="M8 96 C12 86 40 84 58 92 C70 98 62 110 50 118" stroke="#5e6062" stroke-width="9"/>
<path d="M8 96 C12 86 40 84 58 92 C70 98 62 110 50 118" stroke="#d4d6d6" stroke-width=".6" stroke-dasharray="3 2"/>
<path d="M36 70 C50 66 66 72 66 82 C66 90 54 92 46 88" stroke="#6a6c6e" stroke-width="6"/>
<path d="M100 80 C110 70 130 70 150 80 C160 86 160 100 150 110" stroke="#6e7072" stroke-width="7"/>
<path d="M104 100 C120 96 140 104 156 118" stroke="#d0d2d2" stroke-width="1.200"/>
</g>
<path d="M56 120 L77.500 57 H84.500 L104 120 Z" fill="#8e9ca8"/>
<path d="M57.500 120 L78.200 57 M102.500 120 L83.800 57" stroke="#eef2f4" stroke-width="1.200" fill="none"/><path d="M80.800 120 L81 57" stroke="#e4e8ea" stroke-width=".5" fill="none"/>
<!-- posts -->
<path d="M33 58 L36 58 L41.500 86 L37 86 Z" fill="#4a4e50"/><path d="M136 56 H139.500 L139 66 H136.500 Z" fill="#4a4e50"/><path d="M101.500 58 H103.500 L104 72 H102 Z" fill="#5a5e60"/><path d="M14.500 70 H16 V80 H14.500 Z M61 50 H62.200 V58 H61 Z" fill="#6a6e70"/>
<!-- signs -->
<g stroke="#2a2a2a" stroke-width=".7" stroke-linejoin="round">
<path d="M8.500 36 L26.500 4 L54.500 28 L35.500 60 Z" fill="#f6a81c"/>
<path d="M123.500 34.500 L142 19 L156 42 L137.500 60 Z" fill="#f6a81c"/>
<path d="M89.500 49 L98 34.500 L111 45 L102.500 60 Z" fill="#f6ac22"/>
</g>
<path d="M10.500 72 L16 62.500 L22.500 69 L16 78 Z" fill="#f0aa2a" stroke="#6a5a2a" stroke-width=".4"/>
<path d="M58 46 L62 40 L66.500 46.500 L62 53 Z" fill="#f4d08a" opacity=".9"/><path d="M9 50 L11.500 46.500 L13.500 50.500 L11 54 Z M116 45.500 L118.500 42 L120.500 46 L118 49.500 Z" fill="#e8c070"/><path d="M151 52.500 L154.500 47.500 L158 53 L154.500 58.500 Z" fill="#f0b440"/>
<path d="M16 33 L17 37.500 L39 34 L40 38.500 L48 30 L37.500 25.500 L38.500 30 Z" fill="#151515"/>
<path d="M138.500 52 L141 51.500 L141 41 L147 34 L148.500 36 L149.500 29.500 L143.500 30.500 L145 32.500 L140 38 L136.500 32 L138.500 31 L133 27.500 L131.500 34 L133.500 33 L138 40.500 Z" fill="#151515"/>
<path d="M97 53 L97 45 C97 40 103 40 104.500 44 L105.500 48 L107 47 L105 52.500 L100 50 L102.500 49 L102 45.500 C101.500 44 99.500 44 99.500 46 L99.500 53 Z" fill="#222"/>
<path d="M13.500 71.500 L15.500 67.500 L17.500 70 L19 68" stroke="#222" stroke-width="1" fill="none"/>
<!-- man -->
<path d="M78.500 83.500 C78.500 81.500 82 81.500 82 83.500 L82 86 C84 86.500 85 88 85 90 L85.800 98 L84 99 L83.500 104 L82.500 118.500 H80.500 L80.300 106 L79.500 118.500 H78 L77.500 104 L76.500 99 L75.400 97 L76.500 89 C76.800 87.500 77.500 86.500 78.500 86 Z" fill="#2a4478"/>
<!-- callout -->
<path d="M110.400 66.700 H151.500 C155 66.700 157.500 69.200 157.500 72.700 V101.600 C157.500 105.100 155 107.600 151.500 107.600 H127.600 L119.200 112.800 L111.900 107.600 H110.400 C106.900 107.600 104.400 105.100 104.400 101.600 V72.700 C104.400 69.200 106.900 66.700 110.400 66.700 Z" fill="url(#s16c)" stroke="#111" stroke-width="1"/>
<g font-family="DejaVu Sans, sans-serif" font-weight="bold" font-size="3.800" fill="#111" text-anchor="middle" direction="rtl">
<text x="131" y="78.900">توجه به نتایج تصمیم ها</text><text x="131" y="86.200">برای خود و دیگران، یکی</text><text x="131" y="92.300">از جنبه های تصمیم</text><text x="131" y="98.900">گیری مناسب است.</text>
</g></svg></div>
<div class="num" style="left:613px;top:632.1px;">16</div>
<svg class="abs" style="left:759px;top:633px" width="14" height="12" viewBox="0 0 14 12"><path d="M7.7 2.1 L8.8 5.3 L12.2 5.3 L9.5 7.4 L10.5 10.6 L7.7 8.7 L4.9 10.6 L5.9 7.4 L3.2 5.3 L6.6 5.3 Z" fill="#5a5a5a"/><rect x="2.200" y="3.800" width="1.200" height="1.100" fill="#777"/><rect x="2.200" y="7.300" width="1.200" height="1.100" fill="#777"/></svg>
<div class="thumb" style="left:806px;top:505px">
<svg viewBox="0 0 160 120" preserveAspectRatio="none"><defs>
<linearGradient id="s17t" x1="0" y1="0" x2="0" y2="1"><stop offset="0" stop-color="#fde2cc"/><stop offset="1" stop-color="#f9b074"/></linearGradient>
<linearGradient id="s17p" x1="0" y1="0" x2="1" y2="1"><stop offset="0" stop-color="#8a7452"/><stop offset=".6" stop-color="#4a3a28"/><stop offset="1" stop-color="#2a2018"/></linearGradient>
</defs>
<rect width="160" height="120" fill="#e4dfec"/>
<rect x="95.900" y="9.200" width="37.400" height="12.400" fill="url(#s17t)" stroke="#f79646" stroke-width=".8"/>
<rect x="75.700" y="29.200" width="75.900" height="34.800" fill="url(#s17t)" stroke="#f79646" stroke-width=".8"/>
<g font-family="DejaVu Sans, sans-serif" font-weight="bold" fill="#111" text-anchor="middle" direction="rtl">
<text x="114.900" y="15.200" font-size="4.400">فعالیت در منزل</text>
<g font-size="2.900">
<text x="113.700" y="33.400">استنباط ما در تصمیم گیری چارچوبه‌ای درباره ی</text>
<text x="113.700" y="39.300">یک موضوع دیگر دارد که در خانه هایی متوسط و</text>
<text x="113.700" y="44.700">حتی به عنوان خانه باشد، با کمک دیگر با اعضای</text>
<text x="113.700" y="49.900">خانواده بنویسید. در چه موقعیت هایی دیگر</text>
<text x="113.700" y="55.500">استنباط بر تصمیم گیری بجا و مناسب و در چه</text>
<text x="113.700" y="60.700">موقعیت هایی نابجا است؟ با مثال توضیح دهید.</text>
</g></g>
<rect x="17.900" y="62.700" width="52.600" height="40.500" rx="1.500" fill="url(#s17p)"/>
<path d="M19 88 L70.500 78 V103.200 H19 Z" fill="#a8262e"/>
<path d="M56 76 C58 72 68 72 70 76 L70 80 L58 82 Z" fill="#3a3a3c"/><path d="M62 88 C64 84 72 84 74 90 L72 93 H64 Z" fill="#8a8a8c"/>
<path d="M33 76 C37 72 49 72 53 76 L55 89 L34 91 Z" fill="#d6d6d8"/>
<path d="M33 78 L30 70 C29 67 33 65.500 35 68 L38 76 Z M53 78 L57 70 C58 67 54 65.500 52 68 L49 76 Z" fill="#cfcfd2"/>
<circle cx="34" cy="67" r="2.600" fill="#d8a878"/><circle cx="53" cy="67" r="2.600" fill="#d8a878"/>
<ellipse cx="43.500" cy="66" rx="6" ry="7" fill="#dcaa7a"/><path d="M40 67 H42 M45.500 67 H47.500 M41.500 70.500 C43 71.500 45 71.500 46.500 70.500" stroke="#6a4a2a" stroke-width=".5" fill="none"/>
<path d="M37.500 62 C37 55 49.500 54 50.500 61 L50 63 C47 61 41.500 61 38 63.500 Z" fill="#2a4ab0"/>
<path d="M31 96 L52 90 L72 100 L74 104 L52 108 L34 110 Z" fill="#f0f0f0" stroke="#c8c8c8" stroke-width=".4"/><path d="M52 90 L52 108" stroke="#bbb" stroke-width=".5"/>
<path d="M38 86 L50 84 L52 91 L40 93 Z" fill="#fff" stroke="#c8282e" stroke-width=".6"/><ellipse cx="45" cy="88.500" rx="4" ry="1.800" fill="#c8282e"/>
<rect x="42.500" y="95.500" width="6.500" height="5" fill="#f4f0c8" stroke="#555" stroke-width=".4"/>
<path d="M20 88 C20 86 30 86 30 88 L29.500 97 C28 99.500 22 99.500 20.500 97 Z" fill="#e8c020"/><path d="M20 90 C16 90 16 96 20.500 95.500" fill="none" stroke="#e8c020" stroke-width="1.300"/><ellipse cx="25" cy="88" rx="4.600" ry="1.200" fill="#a88a10"/></svg></div>
<div class="num" style="left:808px;top:632.1px;">17</div>
<svg class="abs" style="left:954px;top:633px" width="14" height="12" viewBox="0 0 14 12"><path d="M7.7 2.1 L8.8 5.3 L12.2 5.3 L9.5 7.4 L10.5 10.6 L7.7 8.7 L4.9 10.6 L5.9 7.4 L3.2 5.3 L6.6 5.3 Z" fill="#5a5a5a"/><rect x="2.200" y="3.800" width="1.200" height="1.100" fill="#777"/><rect x="2.200" y="7.300" width="1.200" height="1.100" fill="#777"/></svg>
<div class="thumb" style="left:1001px;top:505px">
<svg viewBox="0 0 160 120" preserveAspectRatio="none"><defs>
<linearGradient id="s18m" x1="0" y1="0" x2="0" y2="1"><stop offset="0" stop-color="#9fbed6"/><stop offset="1" stop-color="#d2e2ee"/></linearGradient>
<linearGradient id="s18g" x1="0" y1="0" x2="0" y2="1"><stop offset="0" stop-color="#5aa83a"/><stop offset="1" stop-color="#479a2c"/></linearGradient>
<radialGradient id="s18t" cx=".4" cy=".35" r=".75"><stop offset="0" stop-color="#f43a3a"/><stop offset="1" stop-color="#c81018"/></radialGradient>
<filter id="s18b" x="-10%" y="-10%" width="120%" height="120%"><feGaussianBlur stdDeviation=".45"/></filter>
</defs>
<rect width="160" height="120" fill="#fff"/>
<path d="M0 49 C6 45 12 41 18 40 C28 42 36 42 44 40 C54 34 64 28 76 25 C84 24 92 28 98 27 C110 24 124 19 136 19.500 C146 20 154 17 160 16 V80 H0 Z" fill="url(#s18m)" filter="url(#s18b)"/>
<rect y="72" width="160" height="48" fill="url(#s18g)"/>
<g filter="url(#s18b)">
<path d="M72.4 70.1 L74.1 86.7" stroke="#4a9a30" stroke-width="1.0"/>
<path d="M94.0 63.3 L94.0 81.6" stroke="#4a9a30" stroke-width="1.2"/>
<path d="M15.1 65.5 L13.4 85.6" stroke="#4a9a30" stroke-width="1.2"/>
<path d="M6.7 77.7 L8.6 96.2" stroke="#4a9a30" stroke-width="1.1"/>
<path d="M25.2 60.3 L25.3 72.9" stroke="#4a9a30" stroke-width="0.8"/>
<path d="M38.7 60.5 L38.6 76.9" stroke="#4a9a30" stroke-width="1.3"/>
<path d="M83.1 71.5 L83.1 90.1" stroke="#4a9a30" stroke-width="1.0"/>
<path d="M44.5 78.0 L46.5 98.4" stroke="#4a9a30" stroke-width="1.2"/>
<path d="M50.4 64.1 L49.6 76.8" stroke="#4a9a30" stroke-width="1.2"/>
<path d="M64.1 75.2 L63.6 96.8" stroke="#4a9a30" stroke-width="1.3"/>
<path d="M0.1 63.8 L1.7 80.5" stroke="#4a9a30" stroke-width="1.4"/>
<path d="M63.6 61.3 L64.1 81.1" stroke="#4a9a30" stroke-width="0.8"/>
<path d="M13.9 66.0 L15.8 85.6" stroke="#4a9a30" stroke-width="0.7"/>
<path d="M39.4 61.8 L37.7 81.8" stroke="#4a9a30" stroke-width="0.7"/>
<path d="M89.5 68.1 L88.2 87.4" stroke="#4a9a30" stroke-width="0.7"/>
<path d="M103.0 62.1 L102.7 76.2" stroke="#4a9a30" stroke-width="0.8"/>
<path d="M155.3 74.5 L154.6 95.3" stroke="#4a9a30" stroke-width="0.8"/>
<path d="M63.1 75.4 L63.7 88.4" stroke="#4a9a30" stroke-width="1.4"/>
<path d="M34.1 64.6 L35.2 79.9" stroke="#4a9a30" stroke-width="0.8"/>
<path d="M11.7 61.6 L12.1 76.1" stroke="#4a9a30" stroke-width="1.1"/>
<path d="M59.5 68.2 L61.3 85.0" stroke="#4a9a30" stroke-width="1.1"/>
<path d="M138.6 63.3 L137.3 84.4" stroke="#4a9a30" stroke-width="1.3"/>
<path d="M39.9 63.4 L40.9 84.8" stroke="#4a9a30" stroke-width="0.8"/>
<path d="M152.0 75.9 L152.4 92.1" stroke="#4a9a30" stroke-width="0.7"/>
<path d="M6.2 77.3 L5.1 96.4" stroke="#4a9a30" stroke-width="0.8"/>
<path d="M131.8 70.7 L131.0 84.5" stroke="#4a9a30" stroke-width="1.2"/>
<path d="M11.0 64.1 L11.2 84.6" stroke="#4a9a30" stroke-width="1.1"/>
<path d="M44.8 76.5 L43.7 88.7" stroke="#4a9a30" stroke-width="0.8"/>
<path d="M71.3 61.1 L70.0 76.8" stroke="#4a9a30" stroke-width="1.1"/>
<path d="M21.1 66.5 L22.6 88.3" stroke="#4a9a30" stroke-width="1.1"/>
<path d="M110.6 70.5 L109.2 82.9" stroke="#4a9a30" stroke-width="0.6"/>
<path d="M145.6 72.6 L147.5 84.8" stroke="#4a9a30" stroke-width="1.1"/>
<path d="M77.2 73.1 L76.4 95.1" stroke="#4a9a30" stroke-width="0.7"/>
<path d="M87.4 73.3 L89.0 92.6" stroke="#4a9a30" stroke-width="1.2"/>
<path d="M126.9 76.5 L126.3 95.3" stroke="#4a9a30" stroke-width="1.3"/>
<path d="M139.4 67.5 L140.5 88.1" stroke="#4a9a30" stroke-width="1.1"/>
<path d="M100.0 66.9 L100.3 85.0" stroke="#4a9a30" stroke-width="0.7"/>
<path d="M102.3 77.9 L103.8 97.2" stroke="#4a9a30" stroke-width="0.9"/>
<path d="M117.6 70.5 L117.4 90.8" stroke="#4a9a30" stroke-width="0.7"/>
<path d="M120.0 60.5 L120.4 77.3" stroke="#4a9a30" stroke-width="0.8"/>
<path d="M111.7 69.0 L112.2 90.2" stroke="#4a9a30" stroke-width="0.8"/>
<path d="M1.8 65.4 L2.5 79.4" stroke="#4a9a30" stroke-width="0.7"/>
<path d="M144.9 71.9 L144.7 92.8" stroke="#4a9a30" stroke-width="0.9"/>
<path d="M106.5 63.6 L106.3 83.6" stroke="#4a9a30" stroke-width="1.3"/>
<path d="M140.8 66.9 L141.2 82.1" stroke="#4a9a30" stroke-width="0.7"/>
<path d="M79.4 75.1 L80.8 94.2" stroke="#4a9a30" stroke-width="1.4"/>
<path d="M44.3 63.0 L44.1 77.8" stroke="#4a9a30" stroke-width="0.8"/>
<path d="M66.2 71.3 L66.2 86.4" stroke="#4a9a30" stroke-width="1.3"/>
<path d="M157.1 68.1 L155.4 80.5" stroke="#4a9a30" stroke-width="1.3"/>
<path d="M6.6 72.8 L6.9 87.8" stroke="#4a9a30" stroke-width="1.2"/>
<path d="M3.1 88.9 Q3.6 78.3 8.3 67.6 Q7.7 78.3 3.1 88.9 Z" fill="#4aa832"/>
<path d="M124.7 112.7 Q119.3 97.8 118.4 82.9 Q123.8 97.8 124.7 112.7 Z" fill="#2e8220"/>
<path d="M153.4 108.6 Q147.8 100.0 148.2 91.5 Q153.7 100.0 153.4 108.6 Z" fill="#3c9428"/>
<path d="M120.8 103.3 Q120.6 96.0 125.3 88.7 Q125.5 96.0 120.8 103.3 Z" fill="#4aa832"/>
<path d="M63.0 112.5 Q64.2 98.3 69.9 84.0 Q68.6 98.3 63.0 112.5 Z" fill="#5cb440"/>
<path d="M20.8 100.3 Q16.0 88.3 18.8 76.3 Q23.6 88.3 20.8 100.3 Z" fill="#2e8220"/>
<path d="M74.2 107.4 Q73.3 98.8 79.3 90.2 Q80.2 98.8 74.2 107.4 Z" fill="#3c9428"/>
<path d="M34.1 116.4 Q30.5 101.6 34.7 86.7 Q38.4 101.6 34.1 116.4 Z" fill="#2e8220"/>
<path d="M41.9 109.9 Q35.2 102.7 34.5 95.6 Q41.2 102.7 41.9 109.9 Z" fill="#2e8220"/>
<path d="M88.0 111.7 Q88.5 100.8 93.0 89.9 Q92.6 100.8 88.0 111.7 Z" fill="#3c9428"/>
<path d="M68.6 85.3 Q68.6 74.0 75.3 62.7 Q75.3 74.0 68.6 85.3 Z" fill="#5cb440"/>
<path d="M23.8 102.6 Q21.6 89.8 26.8 77.0 Q29.0 89.8 23.8 102.6 Z" fill="#5cb440"/>
<path d="M92.6 108.8 Q90.2 95.7 93.6 82.7 Q96.0 95.7 92.6 108.8 Z" fill="#4aa832"/>
<path d="M83.6 114.4 Q80.1 102.9 81.7 91.4 Q85.3 102.9 83.6 114.4 Z" fill="#4aa832"/>
<path d="M48.7 89.1 Q46.1 77.7 48.7 66.4 Q51.2 77.7 48.7 89.1 Z" fill="#5cb440"/>
<path d="M85.7 102.1 Q87.4 90.3 93.3 78.4 Q91.6 90.3 85.7 102.1 Z" fill="#5cb440"/>
<path d="M87.0 119.6 Q82.2 111.6 81.7 103.7 Q86.6 111.6 87.0 119.6 Z" fill="#5cb440"/>
<path d="M66.2 118.4 Q63.5 104.1 65.8 89.7 Q68.5 104.1 66.2 118.4 Z" fill="#4aa832"/>
<path d="M54.3 116.4 Q50.7 101.9 54.7 87.5 Q58.4 101.9 54.3 116.4 Z" fill="#3c9428"/>
<path d="M30.6 106.2 Q30.6 91.8 35.1 77.4 Q35.1 91.8 30.6 106.2 Z" fill="#3c9428"/>
<path d="M5.7 89.6 Q4.9 82.5 9.3 75.4 Q10.1 82.5 5.7 89.6 Z" fill="#4aa832"/>
<path d="M99.2 87.8 Q97.0 74.9 99.3 62.1 Q101.5 74.9 99.2 87.8 Z" fill="#2e8220"/>
<path d="M114.8 109.2 Q113.8 95.2 117.0 81.2 Q117.9 95.2 114.8 109.2 Z" fill="#4aa832"/>
<path d="M86.1 115.1 Q81.4 103.8 81.6 92.6 Q86.3 103.8 86.1 115.1 Z" fill="#4aa832"/>
<path d="M37.2 110.7 Q31.9 97.2 34.3 83.7 Q39.6 97.2 37.2 110.7 Z" fill="#2e8220"/>
<path d="M142.5 91.0 Q136.9 77.8 136.1 64.6 Q141.7 77.8 142.5 91.0 Z" fill="#4aa832"/>
<path d="M21.2 87.2 Q21.9 77.1 28.3 67.0 Q27.6 77.1 21.2 87.2 Z" fill="#4aa832"/>
<path d="M32.1 106.6 Q30.5 93.2 33.2 79.8 Q34.9 93.2 32.1 106.6 Z" fill="#2e8220"/>
<path d="M145.8 118.9 Q144.9 110.9 150.0 103.0 Q150.9 110.9 145.8 118.9 Z" fill="#4aa832"/>
<path d="M128.5 101.4 Q125.8 94.2 130.3 87.0 Q132.9 94.2 128.5 101.4 Z" fill="#5cb440"/>
<ellipse cx="32.6" cy="116.0" rx="4.5" ry="2.9" fill="#f2f7ee" opacity=".85"/>
<ellipse cx="152.2" cy="104.3" rx="3.9" ry="2.0" fill="#f2f7ee" opacity=".85"/>
<ellipse cx="74.7" cy="106.0" rx="3.1" ry="2.4" fill="#f2f7ee" opacity=".85"/>
<ellipse cx="2.1" cy="111.7" rx="4.1" ry="1.8" fill="#f2f7ee" opacity=".85"/>
<ellipse cx="72.6" cy="112.9" rx="3.0" ry="1.8" fill="#f2f7ee" opacity=".85"/>
<ellipse cx="26.4" cy="105.9" rx="2.0" ry="2.8" fill="#f2f7ee" opacity=".85"/>
<ellipse cx="128.3" cy="111.8" rx="4.2" ry="2.4" fill="#f2f7ee" opacity=".85"/>
<ellipse cx="64.7" cy="108.6" rx="3.3" ry="3.0" fill="#f2f7ee" opacity=".85"/>
<ellipse cx="128.8" cy="98.0" rx="4.3" ry="2.6" fill="#f2f7ee" opacity=".85"/>
<ellipse cx="124.5" cy="115.3" rx="3.0" ry="2.8" fill="#f2f7ee" opacity=".85"/>
<ellipse cx="140.8" cy="111.5" rx="3.9" ry="2.6" fill="#f2f7ee" opacity=".85"/>
<ellipse cx="64.9" cy="112.4" rx="2.2" ry="2.0" fill="#f2f7ee" opacity=".85"/>
<ellipse cx="75.0" cy="90.3" rx="2.9" ry="2.5" fill="#f2f7ee" opacity=".85"/>
<ellipse cx="99.8" cy="97.2" rx="4.4" ry="2.5" fill="#f2f7ee" opacity=".85"/>
<ellipse cx="54.1" cy="110.5" rx="3.4" ry="2.3" fill="#f2f7ee" opacity=".85"/>
<ellipse cx="62.3" cy="121.0" rx="3.6" ry="2.6" fill="#f2f7ee" opacity=".85"/>
<ellipse cx="121.9" cy="120.4" rx="2.1" ry="2.4" fill="#f2f7ee" opacity=".85"/>
<ellipse cx="118.2" cy="98.0" rx="3.0" ry="1.6" fill="#f2f7ee" opacity=".85"/>
<ellipse cx="144.9" cy="107.1" rx="3.3" ry="3.0" fill="#f2f7ee" opacity=".85"/>
<ellipse cx="90.9" cy="120.8" rx="3.6" ry="2.7" fill="#f2f7ee" opacity=".85"/>
<ellipse cx="12.2" cy="108.5" rx="3.9" ry="1.6" fill="#f2f7ee" opacity=".85"/>
<ellipse cx="148.8" cy="95.0" rx="3.2" ry="1.8" fill="#f2f7ee" opacity=".85"/>
<ellipse cx="79.3" cy="108.9" rx="2.1" ry="2.9" fill="#f2f7ee" opacity=".85"/>
<ellipse cx="67.3" cy="106.3" rx="3.5" ry="2.0" fill="#f2f7ee" opacity=".85"/>
<ellipse cx="45.7" cy="110.3" rx="3.4" ry="1.9" fill="#f2f7ee" opacity=".85"/>
<ellipse cx="114.7" cy="99.2" rx="2.0" ry="1.9" fill="#f2f7ee" opacity=".85"/>
<ellipse cx="120.7" cy="102.1" rx="4.2" ry="2.6" fill="#f2f7ee" opacity=".85"/>
<ellipse cx="8.0" cy="120.7" rx="4.4" ry="1.6" fill="#f2f7ee" opacity=".85"/>
<ellipse cx="144.9" cy="103.3" rx="3.2" ry="3.0" fill="#f2f7ee" opacity=".85"/>
<ellipse cx="39.0" cy="106.2" rx="4.3" ry="2.6" fill="#f2f7ee" opacity=".85"/>
<ellipse cx="74.9" cy="120.3" rx="4.0" ry="2.4" fill="#f2f7ee" opacity=".85"/>
<ellipse cx="18.4" cy="109.4" rx="3.1" ry="1.8" fill="#f2f7ee" opacity=".85"/>
<ellipse cx="8.3" cy="106.4" rx="2.3" ry="2.2" fill="#f2f7ee" opacity=".85"/>
<ellipse cx="106.9" cy="104.1" rx="2.7" ry="2.4" fill="#f2f7ee" opacity=".85"/>
<ellipse cx="67.1" cy="114.1" rx="3.3" ry="3.0" fill="#f2f7ee" opacity=".85"/>
<ellipse cx="152.4" cy="112.8" rx="2.6" ry="1.7" fill="#f2f7ee" opacity=".85"/>
<ellipse cx="142.8" cy="114.3" rx="3.6" ry="2.0" fill="#f2f7ee" opacity=".85"/>
<ellipse cx="43.4" cy="111.2" rx="3.4" ry="2.4" fill="#f2f7ee" opacity=".85"/>
<ellipse cx="101.3" cy="113.4" rx="2.5" ry="1.9" fill="#f2f7ee" opacity=".85"/>
<ellipse cx="156.8" cy="118.4" rx="4.2" ry="1.6" fill="#f2f7ee" opacity=".85"/>
<ellipse cx="68.0" cy="109.3" rx="2.3" ry="2.3" fill="#f2f7ee" opacity=".85"/>
<ellipse cx="108.2" cy="107.1" rx="3.6" ry="2.1" fill="#f2f7ee" opacity=".85"/>
<ellipse cx="76.6" cy="96.5" rx="2.9" ry="2.6" fill="#f2f7ee" opacity=".85"/>
<ellipse cx="134.2" cy="92.3" rx="2.3" ry="2.7" fill="#f2f7ee" opacity=".85"/>
<ellipse cx="99.8" cy="113.8" rx="2.5" ry="2.1" fill="#f2f7ee" opacity=".85"/>
<ellipse cx="41.3" cy="115.1" rx="2.9" ry="2.5" fill="#f2f7ee" opacity=".85"/>
<ellipse cx="158.3" cy="100.1" rx="3.4" ry="2.6" fill="#f2f7ee" opacity=".85"/>
<ellipse cx="147.3" cy="103.3" rx="2.9" ry="1.6" fill="#f2f7ee" opacity=".85"/>
<ellipse cx="140.0" cy="92.4" rx="2.2" ry="2.3" fill="#f2f7ee" opacity=".85"/>
<ellipse cx="77.6" cy="111.2" rx="2.7" ry="2.7" fill="#f2f7ee" opacity=".85"/>
<ellipse cx="105.9" cy="92.5" rx="2.8" ry="2.6" fill="#f2f7ee" opacity=".85"/>
<ellipse cx="111.0" cy="98.8" rx="2.4" ry="2.0" fill="#f2f7ee" opacity=".85"/>
<ellipse cx="116.2" cy="101.4" rx="2.3" ry="2.6" fill="#f2f7ee" opacity=".85"/>
<ellipse cx="91.1" cy="118.5" rx="4.3" ry="2.9" fill="#f2f7ee" opacity=".85"/>
<ellipse cx="70.1" cy="114.9" rx="2.8" ry="2.0" fill="#f2f7ee" opacity=".85"/>
<ellipse cx="63.9" cy="119.0" rx="4.2" ry="1.9" fill="#f2f7ee" opacity=".85"/>
<ellipse cx="57.9" cy="101.3" rx="2.9" ry="2.1" fill="#f2f7ee" opacity=".85"/>
<ellipse cx="62.0" cy="96.0" rx="3.4" ry="2.7" fill="#f2f7ee" opacity=".85"/>
<ellipse cx="86.5" cy="115.9" rx="3.4" ry="1.8" fill="#f2f7ee" opacity=".85"/>
<ellipse cx="121.4" cy="117.3" rx="2.7" ry="1.5" fill="#f2f7ee" opacity=".85"/>
<ellipse cx="82.5" cy="106.9" rx="3.4" ry="2.9" fill="#f2f7ee" opacity=".85"/>
<ellipse cx="104.2" cy="114.9" rx="2.2" ry="2.3" fill="#f2f7ee" opacity=".85"/>
<circle cx="126.1" cy="90.7" r="0.8" fill="#f8fbf5"/>
<circle cx="117.9" cy="116.8" r="0.8" fill="#f8fbf5"/>
<circle cx="101.5" cy="92.6" r="1.4" fill="#f8fbf5"/>
<circle cx="103.8" cy="95.9" r="0.9" fill="#f8fbf5"/>
<circle cx="122.5" cy="104.7" r="1.4" fill="#f8fbf5"/>
<circle cx="63.1" cy="98.8" r="1.6" fill="#f8fbf5"/>
<circle cx="107.6" cy="103.8" r="1.2" fill="#f8fbf5"/>
<circle cx="115.3" cy="110.7" r="1.5" fill="#f8fbf5"/>
<circle cx="65.7" cy="114.4" r="1.3" fill="#f8fbf5"/>
<circle cx="136.6" cy="113.8" r="1.5" fill="#f8fbf5"/>
<circle cx="142.2" cy="118.6" r="1.3" fill="#f8fbf5"/>
<circle cx="83.8" cy="110.7" r="1.4" fill="#f8fbf5"/>
<circle cx="67.5" cy="101.5" r="0.8" fill="#f8fbf5"/>
<circle cx="118.6" cy="119.7" r="1.0" fill="#f8fbf5"/>
<circle cx="68.0" cy="97.3" r="1.6" fill="#f8fbf5"/>
<circle cx="18.4" cy="108.7" r="1.4" fill="#f8fbf5"/>
<circle cx="73.4" cy="106.7" r="1.5" fill="#f8fbf5"/>
<circle cx="37.7" cy="111.0" r="1.2" fill="#f8fbf5"/>
<circle cx="45.0" cy="93.5" r="1.4" fill="#f8fbf5"/>
<circle cx="49.9" cy="105.5" r="1.4" fill="#f8fbf5"/>
<circle cx="76.7" cy="96.3" r="1.5" fill="#f8fbf5"/>
<circle cx="146.3" cy="98.9" r="1.2" fill="#f8fbf5"/>
<circle cx="153.1" cy="103.4" r="0.9" fill="#f8fbf5"/>
<circle cx="8.0" cy="118.3" r="1.4" fill="#f8fbf5"/>
<circle cx="61.6" cy="104.9" r="1.2" fill="#f8fbf5"/>
<circle cx="43.9" cy="119.7" r="1.3" fill="#f8fbf5"/>
<circle cx="38.0" cy="88.3" r="1.1" fill="#f8fbf5"/>
<circle cx="59.4" cy="113.5" r="1.3" fill="#f8fbf5"/>
<circle cx="97.0" cy="93.0" r="0.8" fill="#f8fbf5"/>
<circle cx="51.5" cy="96.3" r="1.5" fill="#f8fbf5"/>
<circle cx="82.6" cy="108.4" r="1.6" fill="#f8fbf5"/>
<circle cx="42.6" cy="105.1" r="0.8" fill="#f8fbf5"/>
<circle cx="123.3" cy="88.0" r="1.4" fill="#f8fbf5"/>
<circle cx="135.4" cy="114.3" r="0.8" fill="#f8fbf5"/>
<circle cx="43.2" cy="110.9" r="0.8" fill="#f8fbf5"/>
<circle cx="76.8" cy="103.0" r="1.6" fill="#f8fbf5"/>
<circle cx="93.9" cy="115.4" r="1.0" fill="#f8fbf5"/>
<circle cx="126.3" cy="101.3" r="1.5" fill="#f8fbf5"/>
<circle cx="14.6" cy="114.4" r="0.9" fill="#f8fbf5"/>
<circle cx="86.9" cy="104.8" r="0.8" fill="#f8fbf5"/>
<circle cx="133.1" cy="98.0" r="1.0" fill="#f8fbf5"/>
<circle cx="74.8" cy="110.9" r="1.0" fill="#f8fbf5"/>
<circle cx="109.9" cy="91.4" r="1.1" fill="#f8fbf5"/>
<circle cx="73.9" cy="118.9" r="1.4" fill="#f8fbf5"/>
<circle cx="104.6" cy="88.4" r="1.0" fill="#f8fbf5"/>
<circle cx="113.6" cy="95.6" r="1.2" fill="#f8fbf5"/>
<circle cx="73.3" cy="88.3" r="1.6" fill="#f8fbf5"/>
<circle cx="127.9" cy="94.6" r="1.3" fill="#f8fbf5"/>
<circle cx="46.5" cy="100.0" r="1.2" fill="#f8fbf5"/>
<circle cx="47.7" cy="98.8" r="1.1" fill="#f8fbf5"/>
<circle cx="106.7" cy="96.2" r="0.9" fill="#f8fbf5"/>
<circle cx="117.0" cy="98.5" r="1.6" fill="#f8fbf5"/>
<circle cx="90.0" cy="111.2" r="1.0" fill="#f8fbf5"/>
<circle cx="132.3" cy="91.0" r="0.8" fill="#f8fbf5"/>
<circle cx="15.1" cy="109.7" r="1.3" fill="#f8fbf5"/>
<circle cx="28.8" cy="100.9" r="1.5" fill="#f8fbf5"/>
<circle cx="94.8" cy="90.9" r="0.9" fill="#f8fbf5"/>
<circle cx="65.1" cy="90.3" r="1.5" fill="#f8fbf5"/>
<circle cx="68.3" cy="104.4" r="1.3" fill="#f8fbf5"/>
<circle cx="122.7" cy="114.3" r="1.0" fill="#f8fbf5"/>
<circle cx="53.0" cy="101.2" r="0.7" fill="#f8fbf5"/>
<circle cx="64.1" cy="110.4" r="1.6" fill="#f8fbf5"/>
<circle cx="126.3" cy="109.1" r="1.2" fill="#f8fbf5"/>
<circle cx="54.8" cy="108.8" r="0.8" fill="#f8fbf5"/>
<circle cx="60.4" cy="104.3" r="1.4" fill="#f8fbf5"/>
<circle cx="132.0" cy="107.6" r="0.8" fill="#f8fbf5"/>
<circle cx="122.6" cy="116.9" r="1.2" fill="#f8fbf5"/>
<circle cx="56.4" cy="104.0" r="0.8" fill="#f8fbf5"/>
<circle cx="114.1" cy="119.6" r="1.2" fill="#f8fbf5"/>
<circle cx="114.5" cy="114.7" r="0.9" fill="#f8fbf5"/>
<circle cx="151.2" cy="108.1" r="0.9" fill="#f8fbf5"/>
<circle cx="92.2" cy="110.3" r="1.0" fill="#f8fbf5"/>
<circle cx="148.6" cy="99.6" r="1.1" fill="#f8fbf5"/>
<circle cx="19.8" cy="119.2" r="0.8" fill="#f8fbf5"/>
<circle cx="144.6" cy="105.4" r="1.2" fill="#f8fbf5"/>
<circle cx="89.7" cy="96.5" r="1.5" fill="#f8fbf5"/>
<circle cx="158.7" cy="114.2" r="1.2" fill="#f8fbf5"/>
<circle cx="19.6" cy="114.4" r="1.0" fill="#f8fbf5"/>
<circle cx="143.5" cy="95.7" r="1.2" fill="#f8fbf5"/>
<circle cx="132.9" cy="93.9" r="1.2" fill="#f8fbf5"/>
<circle cx="28.8" cy="119.6" r="1.5" fill="#f8fbf5"/>
<circle cx="105.3" cy="97.8" r="1.3" fill="#f8fbf5"/>
<circle cx="118.0" cy="100.2" r="1.2" fill="#f8fbf5"/>
<circle cx="128.6" cy="88.5" r="0.9" fill="#f8fbf5"/>
<circle cx="74.9" cy="92.6" r="1.0" fill="#f8fbf5"/>
<circle cx="91.1" cy="93.6" r="1.2" fill="#f8fbf5"/>
<circle cx="42.2" cy="106.2" r="1.0" fill="#f8fbf5"/>
<circle cx="102.7" cy="89.2" r="1.3" fill="#f8fbf5"/>
<circle cx="23.2" cy="118.7" r="1.2" fill="#f8fbf5"/>
<circle cx="75.2" cy="101.2" r="1.3" fill="#f8fbf5"/>
<circle cx="110.3" cy="112.3" r="1.4" fill="#f8fbf5"/>
<circle cx="77.7" cy="119.8" r="1.5" fill="#f8fbf5"/>
<circle cx="136.8" cy="101.1" r="1.1" fill="#f8fbf5"/>
<circle cx="90.6" cy="117.0" r="1.2" fill="#f8fbf5"/>
<circle cx="84.0" cy="101.8" r="1.5" fill="#f8fbf5"/>
<circle cx="51.3" cy="89.7" r="1.4" fill="#f8fbf5"/>
<circle cx="144.0" cy="111.4" r="1.2" fill="#f8fbf5"/>
<circle cx="120.3" cy="97.8" r="1.2" fill="#f8fbf5"/>
<circle cx="71.5" cy="104.1" r="1.1" fill="#f8fbf5"/>
<circle cx="8.3" cy="110.2" r="1.2" fill="#f8fbf5"/>
<circle cx="38.3" cy="97.8" r="1.1" fill="#f8fbf5"/>
<circle cx="37.7" cy="90.2" r="1.5" fill="#f8fbf5"/>
<circle cx="154.6" cy="109.3" r="1.5" fill="#f8fbf5"/>
<circle cx="67.4" cy="113.8" r="0.9" fill="#f8fbf5"/>
<circle cx="119.5" cy="106.1" r="1.5" fill="#f8fbf5"/>
<circle cx="15.8" cy="113.4" r="0.8" fill="#f8fbf5"/>
<circle cx="86.0" cy="118.4" r="0.7" fill="#f8fbf5"/>
<circle cx="39.0" cy="97.6" r="1.0" fill="#f8fbf5"/>
<circle cx="66.3" cy="90.7" r="1.4" fill="#eef4ea"/>
<circle cx="99.7" cy="84.3" r="1.2" fill="#eef4ea"/>
<circle cx="64.6" cy="80.4" r="1.4" fill="#eef4ea"/>
<circle cx="90.8" cy="86.0" r="1.4" fill="#eef4ea"/>
<circle cx="157.7" cy="85.7" r="0.9" fill="#eef4ea"/>
<circle cx="89.5" cy="91.1" r="1.4" fill="#eef4ea"/>
<circle cx="79.6" cy="90.1" r="1.0" fill="#eef4ea"/>
<circle cx="107.2" cy="82.1" r="1.4" fill="#eef4ea"/>
<circle cx="159.5" cy="82.4" r="1.2" fill="#eef4ea"/>
<circle cx="79.2" cy="90.6" r="0.7" fill="#eef4ea"/>
<circle cx="70.6" cy="88.7" r="1.0" fill="#eef4ea"/>
<circle cx="150.0" cy="90.4" r="1.3" fill="#eef4ea"/>
<circle cx="73.5" cy="88.4" r="1.5" fill="#eef4ea"/>
<circle cx="104.5" cy="80.9" r="0.9" fill="#eef4ea"/>
<circle cx="90.7" cy="88.5" r="0.9" fill="#eef4ea"/>
<circle cx="78.1" cy="82.8" r="1.2" fill="#eef4ea"/>
<circle cx="139.0" cy="84.5" r="1.2" fill="#eef4ea"/>
<circle cx="148.4" cy="87.1" r="0.9" fill="#eef4ea"/>
<circle cx="90.1" cy="91.1" r="1.2" fill="#eef4ea"/>
<circle cx="87.7" cy="87.7" r="0.8" fill="#eef4ea"/>
<circle cx="158.3" cy="85.3" r="1.1" fill="#eef4ea"/>
<circle cx="113.1" cy="80.5" r="1.2" fill="#eef4ea"/>
<circle cx="88.5" cy="83.0" r="1.3" fill="#eef4ea"/>
<circle cx="68.7" cy="83.4" r="1.3" fill="#eef4ea"/>
<circle cx="84.6" cy="83.3" r="1.1" fill="#eef4ea"/>
<circle cx="78.6" cy="90.8" r="1.5" fill="#eef4ea"/>
<circle cx="63.4" cy="85.5" r="1.3" fill="#eef4ea"/>
<circle cx="98.5" cy="91.2" r="1.1" fill="#eef4ea"/>
<circle cx="78.0" cy="86.7" r="1.2" fill="#eef4ea"/>
<circle cx="96.0" cy="87.9" r="1.3" fill="#eef4ea"/>
<circle cx="111.7" cy="86.1" r="1.4" fill="#eef4ea"/>
<circle cx="128.4" cy="86.2" r="1.5" fill="#eef4ea"/>
<circle cx="77.4" cy="89.4" r="0.8" fill="#eef4ea"/>
<circle cx="120.8" cy="82.8" r="1.1" fill="#eef4ea"/>
<circle cx="137.3" cy="89.4" r="1.3" fill="#eef4ea"/>
<circle cx="83.6" cy="85.9" r="0.9" fill="#eef4ea"/>
<circle cx="118.0" cy="86.0" r="0.7" fill="#eef4ea"/>
<circle cx="119.7" cy="88.6" r="1.2" fill="#eef4ea"/>
<circle cx="147.3" cy="82.2" r="0.8" fill="#eef4ea"/>
<circle cx="61.8" cy="86.0" r="1.0" fill="#eef4ea"/>
<path d="M70.7 106.3 Q72.6 91.9 78.8 77.5 Q76.9 91.9 70.7 106.3 Z" fill="#2e8220"/>
<path d="M102.4 113.9 Q94.4 100.1 93.5 86.4 Q101.5 100.1 102.4 113.9 Z" fill="#4aa832"/>
<path d="M6.8 107.5 Q1.1 94.6 2.1 81.6 Q7.7 94.6 6.8 107.5 Z" fill="#2e8220"/>
<path d="M79.7 115.6 Q74.3 103.5 74.7 91.4 Q80.2 103.5 79.7 115.6 Z" fill="#4aa832"/>
<path d="M110.5 119.9 Q107.5 105.6 108.7 91.4 Q111.8 105.6 110.5 119.9 Z" fill="#4aa832"/>
<path d="M111.8 116.9 Q112.0 101.2 116.9 85.6 Q116.7 101.2 111.8 116.9 Z" fill="#2e8220"/>
<path d="M157.8 103.5 Q149.3 91.8 148.6 80.2 Q157.0 91.8 157.8 103.5 Z" fill="#3c9428"/>
<path d="M65.6 112.6 Q61.9 103.9 65.0 95.2 Q68.7 103.9 65.6 112.6 Z" fill="#3c9428"/>
<path d="M155.5 116.3 Q152.1 102.6 157.7 88.8 Q161.0 102.6 155.5 116.3 Z" fill="#4aa832"/>
<path d="M40.5 113.2 Q41.7 103.3 49.2 93.4 Q48.0 103.3 40.5 113.2 Z" fill="#4aa832"/>
<path d="M49.4 122.7 Q43.5 107.3 42.6 91.9 Q48.6 107.3 49.4 122.7 Z" fill="#2e8220"/>
<path d="M104.0 101.4 Q103.9 90.7 111.3 79.9 Q111.3 90.7 104.0 101.4 Z" fill="#2e8220"/>
<path d="M147.8 104.3 Q140.6 89.4 142.1 74.5 Q149.3 89.4 147.8 104.3 Z" fill="#4aa832"/>
<path d="M125.0 105.2 Q123.1 94.4 126.0 83.6 Q128.0 94.4 125.0 105.2 Z" fill="#3c9428"/>
<path d="M76.8 109.6 Q72.7 96.9 76.3 84.1 Q80.5 96.9 76.8 109.6 Z" fill="#4aa832"/>
<path d="M158.9 116.3 Q155.2 101.4 156.6 86.5 Q160.3 101.4 158.9 116.3 Z" fill="#3c9428"/>
<path d="M7.5 106.6 Q4.2 91.0 7.9 75.5 Q11.3 91.0 7.5 106.6 Z" fill="#2e8220"/>
<path d="M42.0 109.4 Q35.9 94.0 37.3 78.7 Q43.4 94.0 42.0 109.4 Z" fill="#4aa832"/>
<path d="M9.2 117.5 Q4.2 103.3 4.0 89.0 Q8.9 103.3 9.2 117.5 Z" fill="#3c9428"/>
<path d="M3.3 107.7 Q4.9 96.7 10.9 85.6 Q9.3 96.7 3.3 107.7 Z" fill="#4aa832"/>
<ellipse cx="41.0" cy="77.6" rx="2.5" ry="2.9" fill="#ec2a30"/>
<ellipse cx="63.0" cy="64.8" rx="1.3" ry="1.5" fill="#d41420"/>
<ellipse cx="82.2" cy="62.6" rx="1.6" ry="1.9" fill="#c81018"/>
<ellipse cx="67.8" cy="70.9" rx="1.5" ry="1.7" fill="#ec2a30"/>
<ellipse cx="50.2" cy="69.0" rx="2.0" ry="2.2" fill="#d41420"/>
<ellipse cx="133.5" cy="70.7" rx="2.1" ry="2.4" fill="#d41420"/>
<ellipse cx="61.8" cy="77.3" rx="1.7" ry="1.9" fill="#ec2a30"/>
<ellipse cx="59.3" cy="72.2" rx="1.5" ry="1.7" fill="#e01e28"/>
<ellipse cx="119.5" cy="69.7" rx="1.2" ry="1.4" fill="#ec2a30"/>
<ellipse cx="105.7" cy="61.3" rx="2.9" ry="3.3" fill="#ec2a30"/>
<ellipse cx="106.7" cy="79.1" rx="2.9" ry="3.4" fill="#d41420"/>
<ellipse cx="125.3" cy="65.2" rx="2.8" ry="3.2" fill="#e01e28"/>
<ellipse cx="62.8" cy="61.2" rx="2.0" ry="2.3" fill="#ec2a30"/>
<ellipse cx="45.5" cy="74.1" rx="1.6" ry="1.9" fill="#c81018"/>
<ellipse cx="32.3" cy="75.4" rx="1.9" ry="2.2" fill="#d41420"/>
<ellipse cx="83.3" cy="74.9" rx="3.0" ry="3.5" fill="#d41420"/>
<ellipse cx="76.5" cy="65.1" rx="2.9" ry="3.3" fill="#ec2a30"/>
<ellipse cx="112.0" cy="60.5" rx="2.0" ry="2.3" fill="#ec2a30"/>
<ellipse cx="145.6" cy="78.2" rx="1.7" ry="2.0" fill="#c81018"/>
<ellipse cx="79.3" cy="71.7" rx="2.1" ry="2.5" fill="#ec2a30"/>
<ellipse cx="141.8" cy="61.4" rx="1.3" ry="1.5" fill="#ec2a30"/>
<ellipse cx="142.7" cy="71.3" rx="1.7" ry="2.0" fill="#d41420"/>
<ellipse cx="102.8" cy="67.7" rx="1.9" ry="2.2" fill="#ec2a30"/>
<ellipse cx="5.0" cy="74.1" rx="1.6" ry="1.9" fill="#e01e28"/>
<ellipse cx="100.4" cy="72.4" rx="2.0" ry="2.3" fill="#c81018"/>
<ellipse cx="10.2" cy="61.4" rx="2.1" ry="2.4" fill="#c81018"/>
<ellipse cx="61.1" cy="78.2" rx="1.3" ry="1.5" fill="#d41420"/>
<ellipse cx="109.3" cy="65.5" rx="2.2" ry="2.5" fill="#c81018"/>
<ellipse cx="156.3" cy="63.0" rx="1.6" ry="1.8" fill="#d41420"/>
<ellipse cx="41.3" cy="64.4" rx="2.2" ry="2.6" fill="#c81018"/>
<ellipse cx="0.6" cy="70.9" rx="2.9" ry="3.3" fill="#e01e28"/>
<ellipse cx="99.9" cy="71.2" rx="2.9" ry="3.3" fill="#ec2a30"/>
<ellipse cx="42.3" cy="62.1" rx="1.2" ry="1.4" fill="#d41420"/>
<ellipse cx="111.3" cy="73.7" rx="3.1" ry="3.6" fill="#d41420"/>
<ellipse cx="25.5" cy="72.4" rx="2.2" ry="2.5" fill="#ec2a30"/>
<ellipse cx="59.1" cy="65.7" rx="2.7" ry="3.1" fill="#c81018"/>
<ellipse cx="37.9" cy="65.0" rx="1.8" ry="2.1" fill="#d41420"/>
<ellipse cx="146.8" cy="74.8" rx="3.0" ry="3.4" fill="#e01e28"/>
<ellipse cx="130.9" cy="77.7" rx="1.8" ry="2.1" fill="#c81018"/>
<ellipse cx="82.0" cy="73.6" rx="1.3" ry="1.5" fill="#c81018"/>
<ellipse cx="139.2" cy="61.1" rx="1.7" ry="2.0" fill="#c81018"/>
<ellipse cx="40.5" cy="72.7" rx="1.9" ry="2.2" fill="#ec2a30"/>
<ellipse cx="29.4" cy="77.1" rx="1.6" ry="1.9" fill="#d41420"/>
<ellipse cx="90.8" cy="68.4" rx="2.6" ry="3.0" fill="#ec2a30"/>
<ellipse cx="128.2" cy="62.5" rx="2.0" ry="2.2" fill="#ec2a30"/>
<ellipse cx="37.0" cy="63.7" rx="1.2" ry="1.4" fill="#d41420"/>
<ellipse cx="42.9" cy="65.4" rx="1.7" ry="2.0" fill="#c81018"/>
<ellipse cx="61.9" cy="73.6" rx="1.5" ry="1.7" fill="#d41420"/>
<ellipse cx="114.1" cy="62.4" rx="1.3" ry="1.5" fill="#ec2a30"/>
<ellipse cx="57.0" cy="70.8" rx="2.8" ry="3.2" fill="#c81018"/>
<ellipse cx="52.8" cy="60.5" rx="2.3" ry="2.6" fill="#c81018"/>
<ellipse cx="27.4" cy="61.3" rx="2.1" ry="2.4" fill="#ec2a30"/>
<ellipse cx="35.8" cy="74.4" rx="2.0" ry="2.3" fill="#d41420"/>
<ellipse cx="157.0" cy="67.8" rx="2.6" ry="3.0" fill="#ec2a30"/>
<ellipse cx="128.0" cy="62.9" rx="1.6" ry="1.8" fill="#e01e28"/>
<ellipse cx="89.0" cy="77.9" rx="3.0" ry="3.4" fill="#c81018"/>
<ellipse cx="19.3" cy="66.5" rx="1.2" ry="1.4" fill="#d41420"/>
<ellipse cx="43.8" cy="68.0" rx="1.8" ry="2.1" fill="#e01e28"/>
<ellipse cx="77.2" cy="67.3" rx="1.7" ry="2.0" fill="#e01e28"/>
<ellipse cx="24.3" cy="60.1" rx="2.7" ry="3.1" fill="#e01e28"/>
<ellipse cx="0.6" cy="66.7" rx="1.5" ry="1.7" fill="#d41420"/>
<ellipse cx="158.7" cy="68.2" rx="1.3" ry="1.5" fill="#ec2a30"/>
<ellipse cx="129.1" cy="67.9" rx="1.3" ry="1.5" fill="#ec2a30"/>
<ellipse cx="44.3" cy="78.8" rx="2.9" ry="3.4" fill="#c81018"/>
<ellipse cx="91.4" cy="78.8" rx="1.3" ry="1.5" fill="#e01e28"/>
<ellipse cx="151.2" cy="70.8" rx="2.5" ry="2.9" fill="#ec2a30"/>
<ellipse cx="57.4" cy="75.1" rx="1.8" ry="2.1" fill="#c81018"/>
<ellipse cx="1.7" cy="64.2" rx="3.1" ry="3.6" fill="#e01e28"/>
<ellipse cx="122.7" cy="65.3" rx="1.7" ry="1.9" fill="#c81018"/>
<ellipse cx="63.9" cy="76.1" rx="2.9" ry="3.3" fill="#e01e28"/>
<ellipse cx="149.8" cy="69.6" rx="2.9" ry="3.3" fill="#c81018"/>
<ellipse cx="40.1" cy="78.2" rx="1.2" ry="1.4" fill="#d41420"/>
<ellipse cx="36.4" cy="67.8" rx="1.9" ry="2.2" fill="#ec2a30"/>
<ellipse cx="129.7" cy="67.3" rx="2.5" ry="2.8" fill="#ec2a30"/>
<ellipse cx="49.9" cy="61.3" rx="2.5" ry="2.9" fill="#e01e28"/>
<ellipse cx="42.3" cy="64.3" rx="1.6" ry="1.8" fill="#e01e28"/>
<ellipse cx="118.9" cy="70.9" rx="2.6" ry="2.9" fill="#d41420"/>
<ellipse cx="55.6" cy="63.1" rx="1.9" ry="2.2" fill="#d41420"/>
<ellipse cx="68.9" cy="60.2" rx="2.2" ry="2.5" fill="#c81018"/>
<ellipse cx="15.2" cy="79.0" rx="2.9" ry="3.3" fill="#d41420"/>
<ellipse cx="3.3" cy="63.5" rx="1.3" ry="1.5" fill="#e01e28"/>
<ellipse cx="92.6" cy="66.4" rx="2.1" ry="2.5" fill="#d41420"/>
<ellipse cx="79.9" cy="75.6" rx="3.0" ry="3.4" fill="#ec2a30"/>
<ellipse cx="11.2" cy="67.8" rx="3.0" ry="3.5" fill="#d41420"/>
<ellipse cx="124.4" cy="70.5" rx="1.2" ry="1.4" fill="#c81018"/>
<ellipse cx="145.8" cy="61.1" rx="2.4" ry="2.8" fill="#ec2a30"/>
<ellipse cx="142.0" cy="77.1" rx="2.5" ry="2.8" fill="#e01e28"/>
<ellipse cx="19.4" cy="74.8" rx="2.7" ry="3.1" fill="#c81018"/>
<ellipse cx="106.5" cy="68.4" rx="2.0" ry="2.3" fill="#d41420"/>
<ellipse cx="60.1" cy="70.8" rx="1.3" ry="1.5" fill="#e01e28"/>
<ellipse cx="84.5" cy="69.0" rx="1.8" ry="2.0" fill="#e01e28"/>
<ellipse cx="95.1" cy="78.6" rx="1.5" ry="1.7" fill="#c81018"/>
<ellipse cx="52.5" cy="65.1" rx="2.4" ry="2.8" fill="#d41420"/>
<ellipse cx="117.9" cy="79.8" rx="2.0" ry="2.3" fill="#d41420"/>
<ellipse cx="120.5" cy="77.9" rx="1.4" ry="1.6" fill="#d41420"/>
</g>
<g filter="url(#s18b)">
<path d="M107.6 44.1 L108.3 120.0" stroke="#5a9a3a" stroke-width="1.6"/>
<path d="M25.2 55.0 L25.5 113.8" stroke="#5a9a3a" stroke-width="1.6"/>
<path d="M74.5 51.3 L75.2 105.2" stroke="#5a9a3a" stroke-width="1.0"/>
<path d="M86.3 51.5 L86.3 112.3" stroke="#5a9a3a" stroke-width="1.0"/>
<path d="M89.0 56.5 L88.1 113.0" stroke="#5a9a3a" stroke-width="1.0"/>
<path d="M50.1 86.1 L50.5 120.0" stroke="#5a9a3a" stroke-width="1.0"/>
<path d="M114.2 87.2 L114.8 120.0" stroke="#5a9a3a" stroke-width="1.0"/>
<path d="M148.1 52.2 L148.2 108.5" stroke="#5a9a3a" stroke-width="1.0"/>
<path d="M136.3 48.0 L135.7 83.8" stroke="#5a9a3a" stroke-width="1.0"/>
<path d="M114.0 54.5 L114.3 83.1" stroke="#5a9a3a" stroke-width="1.0"/>
<path d="M123.2 53.3 L123.3 106.8" stroke="#5a9a3a" stroke-width="1.0"/>
<path d="M129.0 52.0 L129.0 86.5" stroke="#5a9a3a" stroke-width="1.0"/>
<path d="M96.3 69.5 L96.9 120.0" stroke="#5a9a3a" stroke-width="1.0"/>
<path d="M37.5 62.0 L38.0 107.2" stroke="#5a9a3a" stroke-width="1.0"/>
<path d="M9.5 69.5 L10.3 120.0" stroke="#5a9a3a" stroke-width="1.0"/>
<path d="M19.5 64.5 L18.8 103.3" stroke="#5a9a3a" stroke-width="1.0"/>
<path d="M66.0 60.0 L65.2 87.3" stroke="#5a9a3a" stroke-width="1.0"/>
<path d="M68.0 72.5 L67.7 120.0" stroke="#5a9a3a" stroke-width="1.0"/>
<path d="M137.5 71.0 L138.2 101.1" stroke="#5a9a3a" stroke-width="1.0"/>
<path d="M54.0 50.0 L53.4 89.6" stroke="#5a9a3a" stroke-width="1.0"/>
<path d="M102.0 60.0 L102.7 107.6" stroke="#5a9a3a" stroke-width="1.0"/>
<path d="M132.5 59.5 L133.3 88.0" stroke="#5a9a3a" stroke-width="1.0"/>
<path d="M17.0 80.0 L18.0 113.2" stroke="#5a9a3a" stroke-width="1.0"/>
<path d="M142.0 61.5 L142.3 118.2" stroke="#5a9a3a" stroke-width="1.0"/>
<path d="M152.0 61.0 L152.5 93.9" stroke="#5a9a3a" stroke-width="1.0"/>
<path d="M157.0 64.5 L157.3 105.6" stroke="#5a9a3a" stroke-width="1.0"/>
<path d="M2.5 69.0 L1.5 106.9" stroke="#5a9a3a" stroke-width="1.0"/>
<path d="M78.0 68.0 L77.6 116.0" stroke="#5a9a3a" stroke-width="1.0"/>
<path d="M96.1 24.4 C94.9 37.1 100.7 45.1 107.6 45.1 C114.5 45.1 120.2 37.1 119.1 24.4 C113.3 21.0 101.8 21.0 96.1 24.4 Z" fill="url(#s18t)"/>
<path d="M16.7 40.7 C15.8 50.0 20.1 56.0 25.2 56.0 C30.3 56.0 34.5 50.0 33.7 40.7 C29.4 38.1 20.9 38.1 16.7 40.7 Z" fill="url(#s18t)"/>
<path d="M70.2 41.5 C69.8 48.1 71.9 52.3 74.5 52.3 C77.1 52.3 79.2 48.1 78.8 41.5 C76.7 39.7 72.3 39.7 70.2 41.5 Z" fill="url(#s18t)"/>
<path d="M81.3 43.5 C80.8 49.0 83.3 52.5 86.3 52.5 C89.3 52.5 91.8 49.0 91.3 43.5 C88.8 42.0 83.8 42.0 81.3 43.5 Z" fill="url(#s18t)"/>
<path d="M86.0 51.2 C85.7 55.0 87.2 57.5 89.0 57.5 C90.8 57.5 92.3 55.0 92.0 51.2 C90.5 50.1 87.5 50.1 86.0 51.2 Z" fill="url(#s18t)"/>
<path d="M44.1 75.4 C43.5 82.5 46.5 87.1 50.1 87.1 C53.7 87.1 56.7 82.5 56.1 75.4 C53.1 73.4 47.1 73.4 44.1 75.4 Z" fill="url(#s18t)"/>
<path d="M109.7 79.2 C109.2 84.7 111.5 88.2 114.2 88.2 C116.9 88.2 119.2 84.7 118.7 79.2 C116.5 77.7 112.0 77.7 109.7 79.2 Z" fill="url(#s18t)"/>
<path d="M143.6 44.6 C143.2 49.8 145.4 53.2 148.1 53.2 C150.8 53.2 153.0 49.8 152.6 44.6 C150.3 43.1 145.8 43.1 143.6 44.6 Z" fill="url(#s18t)"/>
<path d="M132.3 40.0 C131.9 45.5 133.9 49.0 136.3 49.0 C138.7 49.0 140.7 45.5 140.3 40.0 C138.3 38.5 134.3 38.5 132.3 40.0 Z" fill="url(#s18t)"/>
<path d="M109.5 47.4 C109.0 52.4 111.3 55.5 114.0 55.5 C116.7 55.5 119.0 52.4 118.5 47.4 C116.2 46.0 111.8 46.0 109.5 47.4 Z" fill="url(#s18t)"/>
<path d="M119.2 46.7 C118.8 51.4 120.8 54.3 123.2 54.3 C125.6 54.3 127.6 51.4 127.2 46.7 C125.2 45.5 121.2 45.5 119.2 46.7 Z" fill="url(#s18t)"/>
<path d="M125.5 45.8 C125.2 50.2 126.9 53.0 129.0 53.0 C131.1 53.0 132.8 50.2 132.5 45.8 C130.8 44.6 127.2 44.6 125.5 45.8 Z" fill="url(#s18t)"/>
<path d="M91.8 60.6 C91.3 66.7 93.6 70.5 96.3 70.5 C99.0 70.5 101.2 66.7 100.8 60.6 C98.5 59.0 94.0 59.0 91.8 60.6 Z" fill="url(#s18t)"/>
<path d="M33.5 54.9 C33.1 59.9 35.1 63.0 37.5 63.0 C39.9 63.0 41.9 59.9 41.5 54.9 C39.5 53.5 35.5 53.5 33.5 54.9 Z" fill="url(#s18t)"/>
<path d="M5.0 62.4 C4.5 67.3 6.8 70.5 9.5 70.5 C12.2 70.5 14.4 67.3 14.0 62.4 C11.8 61.0 7.2 61.0 5.0 62.4 Z" fill="url(#s18t)"/>
<path d="M16.3 59.2 C16.0 63.0 17.6 65.5 19.5 65.5 C21.4 65.5 23.0 63.0 22.7 59.2 C21.1 58.1 17.9 58.1 16.3 59.2 Z" fill="url(#s18t)"/>
<path d="M62.5 53.8 C62.1 58.2 63.9 61.0 66.0 61.0 C68.1 61.0 69.8 58.2 69.5 53.8 C67.8 52.6 64.2 52.6 62.5 53.8 Z" fill="url(#s18t)"/>
<path d="M64.0 65.4 C63.6 70.3 65.6 73.5 68.0 73.5 C70.4 73.5 72.4 70.3 72.0 65.4 C70.0 64.0 66.0 64.0 64.0 65.4 Z" fill="url(#s18t)"/>
<path d="M133.5 64.8 C133.1 69.2 135.1 72.0 137.5 72.0 C139.9 72.0 141.9 69.2 141.5 64.8 C139.5 63.6 135.5 63.6 133.5 64.8 Z" fill="url(#s18t)"/>
<path d="M49.0 42.9 C48.5 47.9 51.0 51.0 54.0 51.0 C57.0 51.0 59.5 47.9 59.0 42.9 C56.5 41.5 51.5 41.5 49.0 42.9 Z" fill="url(#s18t)"/>
<path d="M99.0 55.6 C98.7 58.9 100.2 61.0 102.0 61.0 C103.8 61.0 105.3 58.9 105.0 55.6 C103.5 54.7 100.5 54.7 99.0 55.6 Z" fill="url(#s18t)"/>
<path d="M129.5 54.2 C129.2 58.0 130.7 60.5 132.5 60.5 C134.3 60.5 135.8 58.0 135.5 54.2 C134.0 53.1 131.0 53.1 129.5 54.2 Z" fill="url(#s18t)"/>
<path d="M13.0 73.8 C12.6 78.2 14.6 81.0 17.0 81.0 C19.4 81.0 21.4 78.2 21.0 73.8 C19.0 72.6 15.0 72.6 13.0 73.8 Z" fill="url(#s18t)"/>
<path d="M138.5 56.2 C138.2 60.0 139.9 62.5 142.0 62.5 C144.1 62.5 145.8 60.0 145.5 56.2 C143.8 55.1 140.2 55.1 138.5 56.2 Z" fill="url(#s18t)"/>
<path d="M149.0 56.6 C148.7 59.9 150.2 62.0 152.0 62.0 C153.8 62.0 155.3 59.9 155.0 56.6 C153.5 55.7 150.5 55.7 149.0 56.6 Z" fill="url(#s18t)"/>
<path d="M154.5 59.2 C154.2 63.0 155.5 65.5 157.0 65.5 C158.5 65.5 159.8 63.0 159.5 59.2 C158.2 58.1 155.8 58.1 154.5 59.2 Z" fill="url(#s18t)"/>
<path d="M-0.5 62.8 C-0.8 67.2 0.7 70.0 2.5 70.0 C4.3 70.0 5.8 67.2 5.5 62.8 C4.0 61.6 1.0 61.6 -0.5 62.8 Z" fill="url(#s18t)"/>
<path d="M75.5 63.6 C75.2 66.9 76.5 69.0 78.0 69.0 C79.5 69.0 80.8 66.9 80.5 63.6 C79.2 62.7 76.8 62.7 75.5 63.6 Z" fill="url(#s18t)"/>
<path d="M42 52 C44 48 52 46 56 50 C58 56 56 64 50 66 C44 64 41 58 42 52 Z" fill="#f0781e"/><path d="M46 52 C48 50 52 50 54 54 C54 58 52 62 50 64 C48 60 46 56 46 52 Z" fill="#f6c030"/><path d="M42 52 C43 58 46 63 50 66 C45 65 41 59 42 52 Z" fill="#e03a20"/>
<path d="M150 23 C153 24 155 27 156 30 L160 28 V42 C157 40 155 37 154 34 C152 31 151 27 150 23 Z" fill="#e01e28"/>
</g>
<text x="47.500" y="31" font-family="DejaVu Sans, sans-serif" font-weight="bold" font-size="11.500" fill="#2a9aba" text-anchor="middle" direction="rtl" transform="rotate(-22 47.500 27)">پایان</text></svg></div>
<div class="num" style="left:1003px;top:632.1px;">18</div>
<svg class="abs" style="left:1149px;top:633px" width="14" height="12" viewBox="0 0 14 12"><path d="M7.7 2.1 L8.8 5.3 L12.2 5.3 L9.5 7.4 L10.5 10.6 L7.7 8.7 L4.9 10.6 L5.9 7.4 L3.2 5.3 L6.6 5.3 Z" fill="#5a5a5a"/><rect x="2.200" y="3.800" width="1.200" height="1.100" fill="#777"/><rect x="2.200" y="7.300" width="1.200" height="1.100" fill="#777"/></svg>
<div class="abs" id="sorter" style="z-index:-1"></div>
<!-- status bar -->
<div class="abs" id="status"></div>
<div class="t st" id="st0" style="left:7.400px;">SLIDE 2 OF 18</div>
<div class="t st" id="st1" style="left:134.400px;">PERSIAN</div>
<div class="t st" id="st2" style="left:1304.500px;">66%</div>
<div class="abs" style="left:1049px;top:706px;width:38px;height:22px;background:#b83b1d;"></div>
<svg class="abs" style="left:100px;top:706px" width="20" height="22" viewBox="100 706 20 22">
  <path d="M103.500 711.500 C106 711 108 711.500 109.500 712.500 V721.500 C108 720.500 106 720.200 103.500 720.700 Z M109.500 712.500 C111 711.500 112.500 711.200 114 711.300 M109.500 721.500 C110.500 721 111 720.800 112 720.700" fill="none" stroke="#fff" stroke-width="1"/>
  <path d="M112 716.500 L113.800 718.500 L116.800 714" fill="none" stroke="#fff" stroke-width="1.300"/>
  <path d="M108 722 H111 L109.500 723.500 Z" fill="#fff"/>
</svg>
<svg class="abs" style="left:1020px;top:706px" width="346" height="22" viewBox="1020 706 346 22">
  <!-- normal view -->
  <path d="M1023 710.500 H1037.500 V723 H1023 Z M1028 712.500 V717 H1035.500 V712.500 Z" fill="#fff" fill-rule="evenodd" opacity=".95"/>
  <rect x="1024.500" y="719" width="11" height="1.200" fill="#d24726"/>
  <!-- sorter -->
  <rect x="1061" y="710.500" width="6" height="5.500" fill="#fff"/><rect x="1069" y="710.500" width="6" height="5.500" fill="#fff"/><rect x="1061" y="717.500" width="6" height="5.500" fill="#fff"/><rect x="1069" y="717.500" width="6" height="5.500" fill="#fff"/>
  <!-- reading -->
  <path d="M1099.500 711.500 L1105.500 710.500 L1111.500 711.500 V722 L1105.500 721 L1099.500 722 Z" fill="none" stroke="#fff" stroke-width="1"/>
  <path d="M1105.500 710.500 V723.500 M1101 713.500 H1104 M1101 715.500 H1104 M1101 717.500 H1104 M1101 719.500 H1104 M1107 713.500 H1110 M1107 715.500 H1110 M1107 717.500 H1110 M1107 719.500 H1110" stroke="#fff" stroke-width="1" fill="none"/>
  <!-- slideshow -->
  <path d="M1137 711 H1150 M1138.500 711 V716 C1138.500 718 1140 718.500 1143.500 718.500 C1147 718.500 1148.500 718 1148.500 716 V711 M1143.500 718.500 V722.500 M1141 722.700 H1146" fill="none" stroke="#fff" stroke-width="1.400"/>
  <!-- zoom -->
  <rect x="1168" y="716" width="6" height="2" fill="#fff"/>
  <rect x="1178" y="716" width="100" height="1" fill="#fff"/>
  <rect x="1206" y="711" width="4" height="12" fill="#fff"/>
  <rect x="1228" y="714.500" width="1" height="5" fill="#fff"/>
  <path d="M1282 716 H1290 V718 H1282 Z M1285 713 H1287 V721 H1285 Z" fill="#fff"/>
  <!-- fit -->
  <rect x="1346.500" y="711.500" width="13" height="11" fill="none" stroke="#fff" stroke-width="1"/>
  <path d="M1353 713 V721 M1349 717 H1357 M1351.500 714.500 L1353 713 L1354.500 714.500 M1351.500 719.500 L1353 721 L1354.500 719.500 M1350.500 715.500 L1349 717 L1350.500 718.500 M1355.500 715.500 L1357 717 L1355.500 718.500" fill="none" stroke="#fff" stroke-width="1"/>
</svg>
<!-- taskbar -->
<div class="abs" id="taskbar"></div>
<svg class="abs" style="left:0;top:728px" width="1366" height="40" viewBox="0 728 1366 40">
  <defs>
    <filter id="tbn" x="0" y="0" width="100%" height="100%"><feTurbulence type="fractalNoise" baseFrequency=".45 .6" numOctaves="2" seed="7"/><feColorMatrix values="0 0 0 0 0.3  0 0 0 0 0.2  0 0 0 0 0.45  1.6 0 0 0 -0.62"/></filter>
    <radialGradient id="ffg" cx=".6" cy=".3" r=".8"><stop offset="0" stop-color="#ffde3a"/><stop offset=".45" stop-color="#ff8a1a"/><stop offset="1" stop-color="#f0304a"/></radialGradient>
    <linearGradient id="fold" x1="0" x2="0" y1="0" y2="1"><stop offset="0" stop-color="#fdf3bf"/><stop offset="1" stop-color="#ecc85a"/></linearGradient>
    <linearGradient id="mon" x1="0" x2="1" y1="0" y2="1"><stop offset="0" stop-color="#1c3fc4"/><stop offset="1" stop-color="#79c0f0"/></linearGradient>
  </defs>
  <rect x="0" y="728" width="1366" height="40" fill="#ae94cb"/>
  <rect x="0" y="728" width="1366" height="40" filter="url(#tbn)" opacity=".5"/>
  <!-- buttons -->
  <g fill="#c9b8dc" fill-opacity=".38" stroke="#d3c4e3" stroke-opacity=".8" stroke-width="1">
    <rect x="52.500" y="729.500" width="57" height="37"/>
    <rect x="300.500" y="729.500" width="57" height="37"/>
    <rect x="362.500" y="729.500" width="57" height="37"/>
    <rect x="424.500" y="729.500" width="57" height="37"/>
    <rect x="486.500" y="729.500" width="57" height="37"/>
  </g>
  <rect x="548.500" y="729.500" width="57" height="37" fill="#d8cbe6" fill-opacity=".75" stroke="#efe8f6" stroke-width="1"/><rect x="606" y="729" width="1" height="38" fill="#6e5a94"/><rect x="548" y="767" width="59" height="1" fill="#6e5a94"/>
  <!-- start -->
  <g fill="#fff">
    <path d="M12 739.300 L23 737.700 V747.300 H12 Z"/><path d="M24.300 737.500 L38.200 735.500 V747.300 H24.300 Z"/>
    <path d="M12 748.500 H23 V758.200 L12 756.600 Z"/><path d="M24.300 748.500 H38.200 V760.400 L24.300 758.400 Z"/>
  </g>
  <!-- telegram -->
  <circle cx="81.300" cy="747.400" r="14.100" fill="#2aa3dc"/>
  <path d="M71.500 747.300 L90.500 739.800 L87.300 755.300 L81.300 751.200 L78.800 754 L78.500 750 Z" fill="#fff"/>
  <path d="M78.500 750 L88 741.800 L80.200 750.800 L78.800 754 Z" fill="#c8daea"/>
  <rect x="79.900" y="754" width="16.600" height="9.500" rx="1.500" fill="#8e8e8e"/>
  <text x="88.200" y="762" font-family="Liberation Sans, sans-serif" font-size="8.500" fill="#fff" text-anchor="middle">564</text>
  <!-- IDM -->
  <path d="M127.500 749 C128.500 756 138 759.500 146 756.500 L150 751 C144 755 133 754 130.500 746.500 Z" fill="#3d7bd8"/>
  <path d="M128 746.500 C130 753 141 755.500 148 751.500 L149.500 748 C143 751.500 134 750.500 131.500 744 Z" fill="#e8c020"/>
  <path d="M129 744 C131.500 750 141 752 148.500 748.500 L149 745 C143 748.500 135.500 747.500 133 741.500 Z" fill="#d83a2a"/>
  <circle cx="147.200" cy="744.200" r="10.600" fill="#2e62b8"/>
  <path d="M141 739 C143 736 147 735.500 149.500 737 C148 739.500 150 741.500 153 740.500 C155 742.500 154 746 151.500 747.500 C149 746 146.500 747.500 147 750.500 C144.500 752 141.500 750 140.500 747 C143 745.500 143 742 141 739 Z" fill="#5fae4a"/>
  <circle cx="143.800" cy="740.300" r="3.500" fill="#fff" opacity=".35"/>
  <path d="M139.500 747.500 L158.300 753.500 L141.500 762.300 L145 754.800 Z" fill="#13a01c"/>
  <path d="M139.500 747.500 L158.300 753.500 L145 754.800 Z" fill="#46d23c"/>
  <!-- IE -->
  <text x="205.600" y="762.300" font-family="Liberation Sans, sans-serif" font-weight="bold" font-size="50" fill="#45b4f0" text-anchor="middle">e</text>
  <path d="M194 760 C186 754 194 739 207 734 C216 730.500 222 733 219.500 740" fill="none" stroke="#f2b91e" stroke-width="2.400"/>
  <!-- chrome -->
  <circle cx="266.900" cy="748" r="14.400" fill="#e8e8e8"/>
  <path d="M266.900 748 L254.430 740.800 A14.400 14.400 0 0 1 279.370 740.800 Z" fill="#de3a2e"/>
  <path d="M266.900 748 L279.370 740.800 A14.400 14.400 0 0 1 266.900 762.400 Z" fill="#f5c61a"/>
  <path d="M266.900 748 L266.900 762.400 A14.400 14.400 0 0 1 254.430 740.800 Z" fill="#3fa34d"/>
  <path d="M266.900 740.800 H279.370 A14.400 14.400 0 0 0 254.430 740.800 Z" fill="#de3a2e"/>
  <circle cx="266.900" cy="748" r="6.800" fill="#fff"/><circle cx="266.900" cy="748" r="5.300" fill="#3f7fd8"/>
  <!-- on-screen keyboard -->
  <path d="M322 758.500 H335 L337.500 763 C333 765 324 765 320 763 Z" fill="#c9ccd2"/><rect x="326" y="754" width="5" height="6" fill="#aeb2ba"/>
  <path d="M319.500 734.500 L339 737 V756.500 L319.500 753 Z" fill="url(#mon)" stroke="#e8eef8" stroke-width="1"/>
  <path d="M339 737 L343.500 735.500 V754 L339 756.500 Z" fill="#9fb4d8"/>
  <rect x="313" y="739.500" width="22.500" height="10" rx="1" fill="#2f8fe6" stroke="#dff0ff" stroke-width=".8"/>
  <path d="M315 742 H333.500 M315 744.500 H333.500 M315 747 H333.500" stroke="#e8f4ff" stroke-width="1.300" stroke-dasharray="1.600 .900" fill="none"/>
  <!-- firefox -->
  <circle cx="391" cy="749.500" r="13.300" fill="url(#ffg)"/>
  <path d="M395.500 732 C397.500 736 402 738 404 743 C406 748 405 753 403 756 C404 750 401 746 398 744 C397.500 740 396 736 395.500 732 Z" fill="#ffb21f"/>
  <path d="M378.500 742 C379 738.500 381 737 383 736 C383 738 384 739.500 386 740 C389 738.500 393 739 395.500 741 L391 745 L384 746.500 Z" fill="#ff7a20"/>
  <circle cx="391.300" cy="748.300" r="7.300" fill="#7a3bd6"/>
  <path d="M384 746.500 C386 743.500 390 743.500 393 745 C390 746 388.500 748 390 750.500 C392 753.500 396.500 752.500 398 749.500 C399 755 394 759 388.500 757.500 C383.500 756 381.500 751 384 746.500 Z" fill="#ff5a35"/>
  <!-- explorer -->
  <path d="M438 740 H449 L451 742 H467 V757 H438 Z" fill="#e8c660"/>
  <path d="M440.500 737.500 H452 L454 739.500 H468.500 V744 H440.500 Z" fill="#f3dc8a"/>
  <rect x="438.500" y="743" width="29.500" height="15" rx="1" fill="url(#fold)" stroke="#d9b850" stroke-width=".6"/>
  <rect x="441" y="735.800" width="3.200" height="2.200" fill="#2fae3f"/><rect x="447" y="736.500" width="3.200" height="2.200" fill="#d93030"/><rect x="456.500" y="739.700" width="3.200" height="2.200" fill="#2f7fd8"/>
  <path d="M441 751 C441 748.500 443 748 445 748 H462 C464 748 465.500 748.500 465.500 751 V763 H459 V756.500 H447.500 V763 H441 Z" fill="#4ea6dc" stroke="#bfe3f6" stroke-width=".8"/>
  <path d="M445 745 V757 M439.500 751 H450.500" stroke="#fff" stroke-width="1.200" opacity=".9"/>
  <!-- media player -->
  <path d="M507 740 L524 737.500 V762 L507 759.500 Z" fill="#bcd9ee" stroke="#7fb4dc" stroke-width=".7"/>
  <path d="M504 739.500 L521 737 V762.500 L504 760 Z" fill="#a6cdea" stroke="#7fb4dc" stroke-width=".7"/>
  <path d="M501 739 L518 736.500 V763 L501 760.500 Z" fill="#8fc1e6" stroke="#6ea8d6" stroke-width=".7"/>
  <circle cx="512.500" cy="749.800" r="9" fill="#f08a18" stroke="#fbd9a8" stroke-width="1"/>
  <path d="M509.500 744.500 L518 749.800 L509.500 755 Z" fill="#fff"/>
  <!-- powerpoint -->
  <rect x="577" y="738.500" width="15" height="22" fill="#fff" stroke="#d24726" stroke-width="1.400"/>
  <path d="M585.500 741 A3.600 3.600 0 1 0 589 744.600 H585.500 Z" fill="#d24726"/><path d="M586.500 740 A3.600 3.600 0 0 1 590 743.600 H586.500 Z" fill="#d24726"/>
  <rect x="581" y="751" width="9.500" height="1.400" fill="#d24726"/><rect x="581" y="754.500" width="9.500" height="1.400" fill="#d24726"/>
  <path d="M562 736.500 L580.500 733 V766 L562 762.500 Z" fill="#d24726"/>
  <text x="570.300" y="755.500" font-family="Liberation Sans, sans-serif" font-weight="bold" font-size="16" fill="#fff" text-anchor="middle">P</text>
  <!-- tray -->
  <path d="M1126.500 751.300 H1134.700 L1130.600 747 Z" fill="#fff"/>
  <path d="M1148.500 741.500 V756.500" stroke="#fff" stroke-width="1.600"/>
  <path d="M1149.500 742.500 C1153 741 1155 744.500 1160.500 743 V750.500 C1155 752 1153 748.500 1149.500 750 Z" fill="none" stroke="#fff" stroke-width="1.300"/>
  <circle cx="1158.400" cy="752.600" r="4.600" fill="#e03030" stroke="#fff" stroke-width=".6"/>
  <path d="M1156.400 750.600 L1160.400 754.600 M1160.400 750.600 L1156.400 754.600" stroke="#fff" stroke-width="1.500"/>
  <rect x="1179.500" y="743.500" width="7.500" height="12.500" rx="1" fill="none" stroke="#fff" stroke-width="1.500"/><rect x="1181.500" y="741.500" width="3.500" height="2" fill="#fff"/>
  <path d="M1173 742 V745.500 M1176.200 742 V745.500 M1172.200 745.500 H1177 V749 C1177 750.500 1176 751 1174.600 751 C1173.200 751 1172.200 750.500 1172.200 749 Z M1174.600 751 V756.500" stroke="#fff" stroke-width="1.300" fill="#fff"/>
  <g fill="#fff"><rect x="1195.500" y="752" width="2" height="2.500"/><rect x="1198.700" y="750" width="2" height="4.500"/><rect x="1201.900" y="748" width="2" height="6.500"/><rect x="1205.100" y="745.500" width="2" height="9"/><rect x="1208.300" y="743.200" width="2" height="11.300"/></g>
  <path d="M1219.800 746.500 H1222.500 L1226.500 742 V757 L1222.500 752.500 H1219.800 Z" fill="#fff"/>
  <circle cx="1230" cy="751.900" r="4.300" fill="#fff" stroke="#e02020" stroke-width="1.600"/><path d="M1227 749 L1233 754.900" stroke="#e02020" stroke-width="1.600"/>
  <text x="1261.500" y="744.700" font-family="DejaVu Sans, sans-serif" font-size="11" fill="#fff" text-anchor="middle" direction="rtl">فا</text>
</svg>
<div class="t tk" id="tk0" style="left:1254.700px;top:752.100px;">FA</div>
<div class="t tk" id="tk1" style="left:1304.900px;top:734.500px;">20:17</div>
<div class="t tk" id="tk2" style="left:1289px;top:752.100px;">01/02/2021</div>
</body>
</html>
